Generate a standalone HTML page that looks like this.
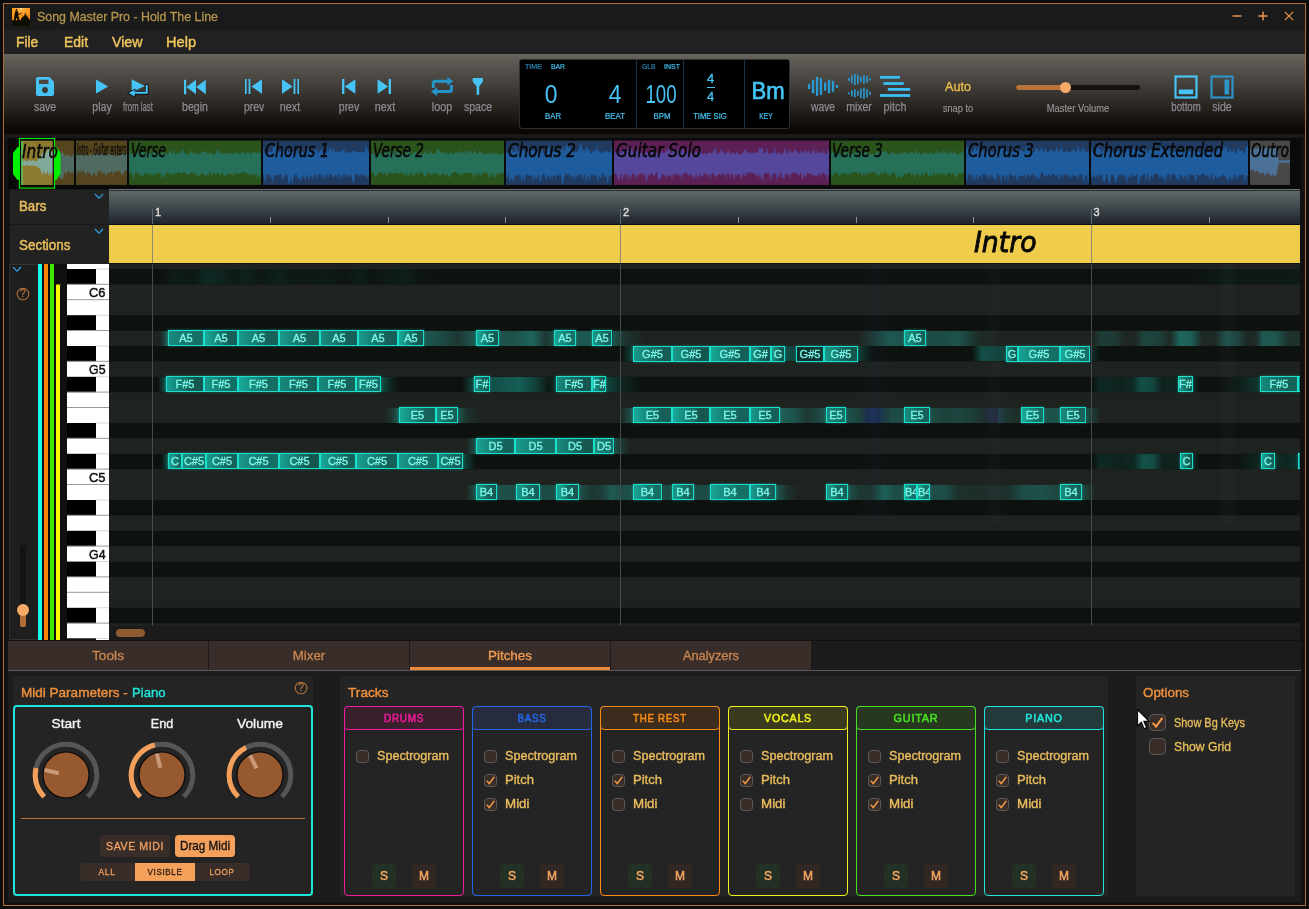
<!DOCTYPE html><html><head><meta charset="utf-8"><title>Song Master Pro - Hold The Line</title><style>
*{box-sizing:border-box;margin:0;padding:0}
html,body{width:1309px;height:909px;overflow:hidden;background:#0b0b0b}
body{font-family:"Liberation Sans",sans-serif;position:relative;color:#ccc}
.a{position:absolute}
.t{position:absolute;white-space:nowrap;line-height:1}
.c{transform:translateX(-50%)}
.lbl{position:absolute;white-space:nowrap;line-height:1;font-size:11.5px;color:#8f8a92;transform:translateX(-50%);top:102px;-webkit-text-stroke:.25px #8f8a92}
.n{position:absolute;height:16px;border:1px solid #1be0cd;color:#7cf4e7;font-size:11px;line-height:14px;text-align:center;overflow:hidden;white-space:nowrap;box-shadow:0 0 2.5px rgba(27,224,205,.45);-webkit-text-stroke:.35px #7cf4e7}
.gl{position:absolute;height:15px;filter:blur(3px)}
.cb{position:absolute;width:13px;height:13px;border:1.5px solid #5e5a58;border-radius:3.5px;background:#382d29}
.cl{position:absolute;white-space:nowrap;line-height:1;font-size:13px;color:#e9bd5c;-webkit-text-stroke:.3px #e9bd5c}
.sm{position:absolute;width:24px;height:24px;border-radius:4px;font-size:12px;line-height:24px;text-align:center;color:#f2a45e;-webkit-text-stroke:.5px #f2a45e}
.hw{font-family:"DejaVu Sans","Liberation Sans",sans-serif;font-style:italic;font-weight:bold;color:#0a0a0a}
</style></head><body><div id="root" style="position:absolute;left:0;top:0;width:1309px;height:909px;will-change:transform">
<div class="a" style="left:3px;top:3px;width:1303px;height:903px;border:1px solid #b06f38;background:#111"></div>
<div class="a" style="left:4px;top:4px;width:1301px;height:26px;background:#1a1a1a"></div>
<div class="a" style="left:4px;top:30px;width:1301px;height:24px;background:#212121"></div>
<div class="a" style="left:4px;top:54px;width:1301px;height:80px;background:linear-gradient(#67645e 0%,#3f3b37 42%,#221e1a 72%,#0a0603 97%)"></div>
<div class="a" style="left:4px;top:134px;width:1301px;height:4px;background:#191919"></div>
<svg class="a" style="left:12px;top:7.700px" width="18" height="18" viewBox="0 0 18 18"><defs><radialGradient id="ig" cx=".5" cy="0" r=".9"><stop offset="0" stop-color="#fff3d8"/><stop offset=".12" stop-color="#ffb040"/><stop offset=".5" stop-color="#ff9a1c"/><stop offset="1" stop-color="#f08a10"/></radialGradient><filter id="ib"><feGaussianBlur stdDeviation=".35"/></filter></defs><rect width="18" height="18" fill="url(#ig)"/><g fill="#0a0806" filter="url(#ib)"><rect x="0" y="12.300" width="18" height="5.700"/><circle cx="4.500" cy="1.900" r=".85"/><path d="M3.300 1.500h3"/><path d="M3.100 3.300h2.900l.4 4.800 1.300 4.200 1 1.800H6.500L4.500 9.600 3.200 14H1.600l.8-5.800z"/><path d="M6 5.800l3.600-1 .3 .8-3.600 1.600z" opacity=".7"/><circle cx="13.300" cy="5.900" r=".8" opacity=".85"/><path d="M12.300 6.800h2.200l.6 2.600h-3.400z" opacity=".85"/><path d="M9.600 7.600l2.300 .9M17 7.800l-2.200 .8" stroke="#0a0806" stroke-width=".7" opacity=".7"/><ellipse cx="13" cy="12" rx="3.900" ry="3.600"/><rect x="9" y="10.500" width="8.500" height="3"/></g></svg>
<div class="t" style="left:37px;top:9.5px;font-size:13.5px;color:#b4964f;-webkit-text-stroke:0.3px #b4964f;transform-origin:0 50%;transform:scaleX(0.918);">Song Master Pro - Hold The Line</div>
<svg class="a" style="left:1228px;top:8px" width="70" height="16" viewBox="0 0 70 16" stroke="#f29a4e" stroke-width="1.4" fill="none"><path d="M4.5 8h9"/><path d="M30.5 8h9M35 3.5v9"/><path d="M56.8 3.8l8.4 8.4M65.2 3.8l-8.4 8.4" stroke-width="1.1"/></svg>
<div class="t" style="left:16.3px;top:34.2px;font-size:15.5px;color:#eec45c;-webkit-text-stroke:0.45px #eec45c;transform-origin:0 50%;transform:scaleX(0.893);">File</div>
<div class="t" style="left:63.5px;top:34.2px;font-size:15.5px;color:#eec45c;-webkit-text-stroke:0.45px #eec45c;transform-origin:0 50%;transform:scaleX(0.899);">Edit</div>
<div class="t" style="left:111.5px;top:34.2px;font-size:15.5px;color:#eec45c;-webkit-text-stroke:0.45px #eec45c;transform-origin:0 50%;transform:scaleX(0.915);">View</div>
<div class="t" style="left:166px;top:34.2px;font-size:15.5px;color:#eec45c;-webkit-text-stroke:0.45px #eec45c;transform-origin:0 50%;transform:scaleX(0.941);">Help</div>
<svg class="a" style="left:36px;top:77px" width="18" height="19" viewBox="0 0 18 18" preserveAspectRatio="none"><path fill="#45c4f5" d="M2 0h11.5L18 4.5V16a2 2 0 0 1-2 2H2a2 2 0 0 1-2-2V2a2 2 0 0 1 2-2z"/><rect x="3" y="2.6" width="9.5" height="4" fill="#4a4742"/><circle cx="9" cy="12.4" r="2.9" fill="#3b3834"/></svg>
<div class="t" style="left:44.9px;top:101.14px;font-size:12px;color:#8f8a92;-webkit-text-stroke:0.25px #8f8a92;transform:translateX(-50%) scaleX(0.876)">save</div>
<svg class="a" style="left:95px;top:78px" width="14" height="16" viewBox="0 0 14 16"><path fill="#45c4f5" d="M1 1.4L13.2 8.6 1 15.6z"/></svg>
<div class="t" style="left:102px;top:101.14px;font-size:12px;color:#8f8a92;-webkit-text-stroke:0.25px #8f8a92;transform:translateX(-50%) scaleX(0.877)">play</div>
<svg class="a" style="left:124px;top:74px" width="28" height="26" viewBox="124 74 28 26"><path fill="#45c4f5" d="M131.700 79.200L144.800 86 131.700 92.200z"/><path d="M146.700 84.200V92.800H134" stroke="#0b0b0b" stroke-width="3.700" fill="none"/><path d="M135.400 88.400L126.800 93.100l8.600 4.700z" fill="#0b0b0b"/><path d="M146.700 85V92.800H134" stroke="#45c4f5" stroke-width="2.100" fill="none"/><path d="M134.600 89.800L128.600 93.100l6 3.300z" fill="#45c4f5"/></svg>
<div class="t" style="left:138px;top:101.14px;font-size:12px;color:#8f8a92;-webkit-text-stroke:0.25px #8f8a92;transform:translateX(-50%) scaleX(0.648)">from last</div>
<svg class="a" style="left:184px;top:78.500px" width="22" height="16" viewBox="0 0.400 22 15.200" preserveAspectRatio="none"><path fill="#45c4f5" d="M0 1h2.2v14H0zM12 1.2v13.6L2.4 8zM21.8 1.2v13.6L12.2 8z"/></svg>
<div class="t" style="left:195px;top:101.14px;font-size:12px;color:#8f8a92;-webkit-text-stroke:0.25px #8f8a92;transform:translateX(-50%) scaleX(0.885)">begin</div>
<svg class="a" style="left:245px;top:78px" width="18" height="17.140" viewBox="0 0 18 16" preserveAspectRatio="none"><path fill="#45c4f5" d="M0 1h1.6v14H0zM3.6 1h1.8v14H3.6zM17 1.2v13.6L6.4 8z"/></svg>
<div class="t" style="left:254px;top:101.14px;font-size:12px;color:#8f8a92;-webkit-text-stroke:0.25px #8f8a92;transform:translateX(-50%) scaleX(0.865)">prev</div>
<svg class="a" style="left:281px;top:78px" width="18" height="17.140" viewBox="0 0 18 16" preserveAspectRatio="none"><path fill="#45c4f5" d="M16.4 1H18v14h-1.6zM12.6 1h1.8v14h-1.8zM1 1.2v13.6L11.6 8z"/></svg>
<div class="t" style="left:289.9px;top:101.14px;font-size:12px;color:#8f8a92;-webkit-text-stroke:0.25px #8f8a92;transform:translateX(-50%) scaleX(0.899)">next</div>
<svg class="a" style="left:341px;top:78px" width="15" height="17.140" viewBox="0 0 15 16" preserveAspectRatio="none"><path fill="#45c4f5" d="M1 1h2.4v14H1zM14.4 1.2v13.6L3.8 8z"/></svg>
<div class="t" style="left:349px;top:101.14px;font-size:12px;color:#8f8a92;-webkit-text-stroke:0.25px #8f8a92;transform:translateX(-50%) scaleX(0.874)">prev</div>
<svg class="a" style="left:377px;top:78px" width="15" height="17.140" viewBox="0 0 15 16" preserveAspectRatio="none"><path fill="#45c4f5" d="M11.6 1H14v14h-2.4zM.6 1.2v13.6L11.2 8z"/></svg>
<div class="t" style="left:384.8px;top:101.14px;font-size:12px;color:#8f8a92;-webkit-text-stroke:0.25px #8f8a92;transform:translateX(-50%) scaleX(0.899)">next</div>
<svg class="a" style="left:428px;top:74px" width="28" height="24" viewBox="428 74 28 24" fill="none"><path d="M433.300 88V83.300a2 2 0 0 1 2-2H448.500M451.400 85V89.600a2 2 0 0 1-2 2H436" stroke="#2596c9" stroke-width="3"/><path d="M447.300 77l6 4.300-6 4.300zM437.200 87.300l-6.200 4.300 6.200 4.300z" fill="#2596c9"/></svg>
<div class="t" style="left:442px;top:101.14px;font-size:12px;color:#8f8a92;-webkit-text-stroke:0.25px #8f8a92;transform:translateX(-50%) scaleX(0.899)">loop</div>
<svg class="a" style="left:470px;top:76px" width="16" height="20" viewBox="470 76 16 20"><path fill="#45c4f5" d="M473.400 78h8.800a.8 .8 0 0 1 .8 .8V81.600L479.200 86.600V94.800H476.600V86.600L472.600 81.600V78.800a.8 .8 0 0 1 .8-.8z"/></svg>
<div class="t" style="left:477.8px;top:101.14px;font-size:12px;color:#8f8a92;-webkit-text-stroke:0.25px #8f8a92;transform:translateX(-50%) scaleX(0.881)">space</div>
<div class="a" style="left:519px;top:59px;width:271px;height:70px;background:#000;border:1px solid #2e2e2e;border-radius:3px"></div>
<div class="a" style="left:636px;top:60px;width:1px;height:68px;background:#14354a"></div>
<div class="a" style="left:683px;top:60px;width:1px;height:68px;background:#14354a"></div>
<div class="a" style="left:744px;top:60px;width:1px;height:68px;background:#14354a"></div>
<div class="t" style="left:525px;top:63.3px;font-size:7.5px;color:#2f88b5;-webkit-text-stroke:0.2px #2f88b5;transform-origin:0 50%;transform:scaleX(0.949);">TIME</div>
<div class="t" style="left:551px;top:63.3px;font-size:7.5px;color:#45c4f5;-webkit-text-stroke:0.2px #45c4f5;transform-origin:0 50%;transform:scaleX(0.908);">BAR</div>
<div class="t" style="left:642px;top:63.3px;font-size:7.5px;color:#2f88b5;-webkit-text-stroke:0.2px #2f88b5;transform-origin:0 50%;transform:scaleX(0.900);">GLB</div>
<div class="t" style="left:664px;top:63.3px;font-size:7.5px;color:#45c4f5;-webkit-text-stroke:0.2px #45c4f5;transform-origin:0 50%;transform:scaleX(0.937);">INST</div>
<div class="t" style="left:550.5px;top:81px;font-size:26px;color:#45c4f5;transform:translateX(-50%) scaleX(0.88);font-weight:normal">0</div>
<div class="t" style="left:614.5px;top:81px;font-size:26px;color:#45c4f5;transform:translateX(-50%) scaleX(0.88);font-weight:normal">4</div>
<div class="t" style="left:661px;top:81px;font-size:26px;color:#45c4f5;transform:translateX(-50%) scaleX(0.72);font-weight:normal">100</div>
<div class="t" style="left:553px;top:111.5px;font-size:9px;color:#45c4f5;-webkit-text-stroke:0.2px #45c4f5;transform:translateX(-50%) scaleX(0.865);">BAR</div>
<div class="t" style="left:615px;top:111.5px;font-size:9px;color:#45c4f5;-webkit-text-stroke:0.2px #45c4f5;transform:translateX(-50%) scaleX(0.876);">BEAT</div>
<div class="t" style="left:661.8px;top:111.5px;font-size:9px;color:#45c4f5;-webkit-text-stroke:0.2px #45c4f5;transform:translateX(-50%) scaleX(0.872);">BPM</div>
<div class="t" style="left:710px;top:111.5px;font-size:9px;color:#45c4f5;-webkit-text-stroke:0.2px #45c4f5;transform:translateX(-50%) scaleX(0.851);">TIME SIG</div>
<div class="t" style="left:766px;top:111.5px;font-size:9px;color:#45c4f5;-webkit-text-stroke:0.2px #45c4f5;transform:translateX(-50%) scaleX(0.750);">KEY</div>
<div class="t c" style="left:710.5px;top:72px;font-size:13px;color:#45c4f5;-webkit-text-stroke:.35px #45c4f5">4</div>
<div class="a" style="left:707px;top:87px;width:8px;height:1px;background:#45c4f5"></div>
<div class="t c" style="left:710.5px;top:90px;font-size:13px;color:#45c4f5;-webkit-text-stroke:.35px #45c4f5">4</div>
<div class="t c" style="left:768px;top:79.500px;font-size:23.500px;color:#45c4f5;-webkit-text-stroke:.7px #45c4f5;transform:translateX(-50%) scaleX(.94)">Bm</div>
<svg class="a" style="left:800px;top:70px" width="120" height="30" viewBox="800 70 120 30"><rect x="807.9" y="83.9" width="2.300" height="5.1" fill="#2a9cd4"/><rect x="811.9" y="79.9" width="2.300" height="13.4" fill="#2a9cd4"/><rect x="815.9" y="76.9" width="2.300" height="18.9" fill="#2a9cd4"/><rect x="819.8" y="78.1" width="2.300" height="16.7" fill="#2a9cd4"/><rect x="824" y="82.4" width="2.300" height="8.2" fill="#2a9cd4"/><rect x="827.9" y="79.6" width="2.300" height="13.5" fill="#2a9cd4"/><rect x="831.8" y="80.9" width="2.300" height="10.9" fill="#2a9cd4"/><rect x="835.8" y="84.9" width="2.300" height="3.1" fill="#2a9cd4"/><rect x="848.00" y="77.90" width="1.600" height="3" fill="#2a9cd4"/><rect x="848.00" y="92.30" width="1.600" height="2" fill="#2a9cd4"/><rect x="851.03" y="75.40" width="1.600" height="8" fill="#2a9cd4"/><rect x="851.03" y="90.30" width="1.600" height="6" fill="#2a9cd4"/><rect x="854.06" y="73.90" width="1.600" height="11" fill="#2a9cd4"/><rect x="854.06" y="89.30" width="1.600" height="8" fill="#2a9cd4"/><rect x="857.09" y="74.60" width="1.600" height="9.6" fill="#2a9cd4"/><rect x="857.09" y="90.80" width="1.600" height="5" fill="#2a9cd4"/><rect x="860.12" y="76.90" width="1.600" height="5" fill="#2a9cd4"/><rect x="860.12" y="88.60" width="1.600" height="9.4" fill="#2a9cd4"/><rect x="863.15" y="75.10" width="1.600" height="8.6" fill="#2a9cd4"/><rect x="863.15" y="87.80" width="1.600" height="11" fill="#2a9cd4"/><rect x="866.18" y="75.90" width="1.600" height="7" fill="#2a9cd4"/><rect x="866.18" y="89.05" width="1.600" height="8.5" fill="#2a9cd4"/><rect x="869.21" y="78.40" width="1.600" height="2" fill="#2a9cd4"/><rect x="869.21" y="91.60" width="1.600" height="3.4" fill="#2a9cd4"/><rect x="879.9" y="75.9" width="20.1" height="2.800" fill="#3abef3"/><rect x="883.4" y="82.1" width="20.3" height="2.800" fill="#3abef3"/><rect x="887.8" y="88.0" width="22.4" height="2.800" fill="#3abef3"/><rect x="879.9" y="94.1" width="30.3" height="2.800" fill="#3abef3"/></svg>
<div class="t" style="left:823px;top:101.14px;font-size:12px;color:#8f8a92;-webkit-text-stroke:0.25px #8f8a92;transform:translateX(-50%) scaleX(0.857)">wave</div>
<div class="t" style="left:859px;top:101.14px;font-size:12px;color:#8f8a92;-webkit-text-stroke:0.25px #8f8a92;transform:translateX(-50%) scaleX(0.876)">mixer</div>
<div class="t" style="left:895px;top:101.14px;font-size:12px;color:#8f8a92;-webkit-text-stroke:0.25px #8f8a92;transform:translateX(-50%) scaleX(0.899)">pitch</div>
<div class="t c" style="left:958px;top:80px;font-size:13.5px;color:#f0be4c;-webkit-text-stroke:.35px #f0be4c;transform:translateX(-50%) scaleX(.93)">Auto</div>
<div class="t" style="left:958px;top:103.11px;font-size:10.5px;color:#9a969a;-webkit-text-stroke:0.15px #9a969a;transform:translateX(-50%) scaleX(0.877)">snap to</div>
<div class="a" style="left:1016px;top:84.500px;width:124px;height:5px;border-radius:3px;background:#151312"></div>
<div class="a" style="left:1016px;top:84.500px;width:50px;height:5px;border-radius:3px;background:#b8733a"></div>
<div class="a" style="left:1059.500px;top:81.500px;width:11px;height:11px;border-radius:50%;background:#f7a968"></div>
<div class="t" style="left:1077.8px;top:103.11px;font-size:10.5px;color:#9a969a;-webkit-text-stroke:0.15px #9a969a;transform:translateX(-50%) scaleX(0.892)">Master Volume</div>
<svg class="a" style="left:1174px;top:75px" width="60" height="24" viewBox="0 0 60 24" fill="none"><rect x="1.500" y="1.500" width="21" height="21" stroke="#45c4f5" stroke-width="2.200"/><rect x="4.800" y="14.500" width="14.400" height="4.700" fill="#45c4f5"/><rect x="37.500" y="1.500" width="21" height="21" stroke="#2f93c8" stroke-width="2.200"/><rect x="50.500" y="4.500" width="4.600" height="15" fill="#2f93c8"/></svg>
<div class="t" style="left:1186px;top:101.14px;font-size:12px;color:#8f8a92;-webkit-text-stroke:0.25px #8f8a92;transform:translateX(-50%) scaleX(0.801)">bottom</div>
<div class="t" style="left:1222.2px;top:101.14px;font-size:12px;color:#8f8a92;-webkit-text-stroke:0.25px #8f8a92;transform:translateX(-50%) scaleX(0.881)">side</div>
<div class="a" style="left:8px;top:138px;width:1293px;height:51px;background:#0a0a0a"></div>
<svg class="a" style="left:0;top:138px" width="1309" height="51" viewBox="0 138 1309 51"><rect x="20" y="140.6" width="54" height="44.3" fill="#54451e"/><path fill="#4f6a60" d="M20 161.0 L21 160.9 L22 160.4 L23 160.9 L24 159.5 L25 161.5 L26 161.4 L27 160.5 L28 160.8 L29 159.4 L30 161.3 L31 160.8 L32 159.9 L33 160.6 L34 161.3 L35 161.5 L36 161.5 L37 159.9 L38 159.3 L39 159.4 L40 155.3 L41 157.9 L42 150.3 L43 152.3 L44 154.6 L45 153.8 L46 149.9 L47 148.9 L48 148.2 L49 150.8 L50 151.0 L51 151.8 L52 153.2 L53 150.1 L54 151.8 L55 154.0 L56 153.4 L57 150.0 L58 155.4 L59 148.0 L60 151.7 L61 154.8 L62 150.8 L63 152.7 L64 154.1 L65 155.3 L66 156.3 L67 154.9 L68 153.7 L69 156.7 L70 154.7 L71 156.8 L72 157.0 L73 153.2 L74 156.7 L74 175.8 L73 171.6 L72 173.6 L71 171.6 L70 175.2 L69 170.7 L68 171.4 L67 172.5 L66 176.0 L65 172.1 L64 172.9 L63 179.1 L62 179.4 L61 178.9 L60 178.8 L59 172.4 L58 175.8 L57 175.1 L56 177.0 L55 171.7 L54 170.8 L53 173.5 L52 171.0 L51 173.4 L50 174.0 L49 172.5 L48 177.3 L47 171.7 L46 171.4 L45 175.7 L44 173.1 L43 171.9 L42 171.6 L41 171.5 L40 170.7 L39 167.3 L38 167.1 L37 166.5 L36 165.1 L35 166.6 L34 165.8 L33 166.1 L32 165.0 L31 165.9 L30 165.2 L29 166.4 L28 165.5 L27 165.9 L26 165.1 L25 165.5 L24 166.0 L23 165.7 L22 165.1 L21 165.3 L20 166.1 z"/><rect x="76" y="140.6" width="51" height="44.3" fill="#54451e"/><path fill="#4f6a60" d="M76 153.7 L77 156.2 L78 150.8 L79 155.5 L80 154.4 L81 153.2 L82 154.0 L83 153.9 L84 155.6 L85 156.8 L86 153.7 L87 154.7 L88 156.8 L89 156.1 L90 153.0 L91 153.9 L92 156.4 L93 155.1 L94 153.3 L95 152.1 L96 153.2 L97 153.1 L98 153.9 L99 153.2 L100 154.3 L101 153.8 L102 153.7 L103 153.2 L104 155.8 L105 154.3 L106 155.9 L107 153.7 L108 155.1 L109 155.0 L110 153.5 L111 154.7 L112 150.2 L113 156.5 L114 155.4 L115 153.8 L116 156.5 L117 154.9 L118 156.2 L119 154.9 L120 155.3 L121 154.2 L122 154.0 L123 153.8 L124 152.0 L125 154.7 L126 153.8 L127 154.3 L127 169.4 L126 172.3 L125 170.3 L124 172.6 L123 174.9 L122 175.1 L121 173.8 L120 171.5 L119 171.1 L118 170.3 L117 171.9 L116 172.1 L115 172.2 L114 171.3 L113 176.5 L112 170.9 L111 171.7 L110 172.1 L109 173.7 L108 172.0 L107 173.7 L106 176.6 L105 173.5 L104 172.6 L103 172.9 L102 174.3 L101 169.8 L100 172.3 L99 171.1 L98 170.1 L97 174.7 L96 178.2 L95 173.8 L94 171.8 L93 175.4 L92 175.9 L91 174.9 L90 173.6 L89 172.7 L88 172.0 L87 171.1 L86 177.3 L85 172.2 L84 172.5 L83 169.4 L82 173.0 L81 169.6 L80 173.8 L79 170.5 L78 170.4 L77 175.9 L76 171.7 z"/><rect x="129" y="140.6" width="132" height="44.3" fill="#2a541c"/><path fill="#26705a" d="M129 150.0 L130 151.9 L131 154.7 L132 153.3 L133 154.6 L134 153.3 L135 151.9 L136 153.7 L137 150.7 L138 153.3 L139 154.1 L140 150.5 L141 153.3 L142 150.8 L143 153.2 L144 151.5 L145 153.7 L146 154.8 L147 150.4 L148 152.9 L149 151.9 L150 153.2 L151 154.2 L152 154.3 L153 153.4 L154 151.9 L155 151.7 L156 154.2 L157 153.9 L158 153.0 L159 152.9 L160 154.5 L161 152.6 L162 153.7 L163 151.2 L164 153.2 L165 153.2 L166 153.9 L167 154.6 L168 152.7 L169 153.6 L170 148.9 L171 151.2 L172 154.3 L173 152.7 L174 149.8 L175 154.9 L176 153.9 L177 153.3 L178 153.8 L179 150.7 L180 152.3 L181 154.2 L182 149.0 L183 149.8 L184 151.5 L185 153.4 L186 153.6 L187 154.7 L188 154.5 L189 154.3 L190 149.2 L191 153.4 L192 149.7 L193 154.1 L194 153.8 L195 152.6 L196 153.3 L197 153.1 L198 153.6 L199 154.8 L200 153.6 L201 153.8 L202 151.8 L203 151.7 L204 151.9 L205 152.0 L206 150.0 L207 152.3 L208 154.2 L209 154.3 L210 149.9 L211 153.4 L212 154.4 L213 154.9 L214 152.7 L215 154.6 L216 153.6 L217 151.0 L218 149.6 L219 150.7 L220 153.4 L221 153.7 L222 151.8 L223 154.7 L224 152.7 L225 153.8 L226 152.2 L227 154.8 L228 153.6 L229 153.3 L230 153.3 L231 153.3 L232 154.3 L233 152.3 L234 154.5 L235 152.1 L236 153.7 L237 150.1 L238 153.8 L239 154.3 L240 154.5 L241 152.4 L242 153.5 L243 152.0 L244 152.5 L245 154.7 L246 153.0 L247 150.9 L248 154.3 L249 150.8 L250 154.8 L251 154.5 L252 152.4 L253 152.6 L254 152.9 L255 150.8 L256 153.8 L257 152.3 L258 153.9 L259 151.1 L260 153.9 L261 152.4 L261 175.3 L260 179.3 L259 173.7 L258 177.6 L257 177.2 L256 171.8 L255 177.2 L254 174.2 L253 173.0 L252 174.7 L251 175.6 L250 173.9 L249 174.2 L248 174.5 L247 172.5 L246 174.2 L245 172.3 L244 171.8 L243 172.3 L242 171.9 L241 173.1 L240 173.1 L239 174.2 L238 173.3 L237 173.1 L236 173.2 L235 172.0 L234 178.1 L233 174.3 L232 171.9 L231 175.5 L230 173.1 L229 173.5 L228 174.6 L227 172.9 L226 176.6 L225 174.7 L224 178.9 L223 172.3 L222 174.3 L221 172.3 L220 178.2 L219 173.4 L218 172.5 L217 173.5 L216 173.8 L215 174.6 L214 172.7 L213 172.0 L212 177.4 L211 173.0 L210 171.9 L209 172.4 L208 179.0 L207 173.5 L206 175.0 L205 176.4 L204 173.7 L203 173.5 L202 172.6 L201 174.8 L200 174.5 L199 177.5 L198 175.6 L197 175.1 L196 172.5 L195 174.7 L194 174.0 L193 172.7 L192 172.3 L191 172.6 L190 173.8 L189 174.0 L188 174.6 L187 175.0 L186 173.8 L185 173.0 L184 171.7 L183 172.7 L182 173.2 L181 173.4 L180 173.0 L179 171.7 L178 172.2 L177 174.2 L176 172.6 L175 172.6 L174 177.5 L173 173.0 L172 174.0 L171 174.5 L170 173.0 L169 173.9 L168 172.5 L167 172.6 L166 173.3 L165 176.8 L164 177.7 L163 173.1 L162 178.6 L161 176.8 L160 172.0 L159 174.4 L158 172.4 L157 173.8 L156 172.7 L155 176.7 L154 173.1 L153 174.5 L152 176.7 L151 171.7 L150 175.2 L149 175.6 L148 172.9 L147 173.0 L146 174.3 L145 172.9 L144 173.4 L143 177.5 L142 175.9 L141 176.6 L140 173.1 L139 176.4 L138 172.0 L137 172.5 L136 172.7 L135 172.8 L134 177.1 L133 179.2 L132 172.6 L131 171.8 L130 174.5 L129 173.4 z"/><rect x="263" y="140.6" width="106" height="44.3" fill="#203a60"/><path fill="#1f5c9e" d="M263 147.2 L264 151.3 L265 153.7 L266 151.6 L267 151.0 L268 152.4 L269 152.0 L270 151.8 L271 151.8 L272 151.8 L273 148.1 L274 146.3 L275 146.2 L276 146.6 L277 145.8 L278 151.3 L279 152.7 L280 151.0 L281 152.4 L282 143.8 L283 148.4 L284 146.2 L285 152.2 L286 152.9 L287 146.8 L288 152.0 L289 151.9 L290 152.3 L291 151.0 L292 152.3 L293 151.2 L294 153.6 L295 145.8 L296 145.1 L297 152.9 L298 153.2 L299 150.4 L300 152.9 L301 150.9 L302 151.3 L303 151.8 L304 153.4 L305 151.6 L306 150.8 L307 146.2 L308 150.0 L309 150.3 L310 150.6 L311 151.4 L312 148.8 L313 152.2 L314 152.3 L315 146.8 L316 152.8 L317 148.9 L318 150.8 L319 153.1 L320 150.8 L321 149.1 L322 150.7 L323 153.1 L324 150.9 L325 150.8 L326 153.6 L327 152.4 L328 145.8 L329 153.0 L330 145.9 L331 149.0 L332 151.8 L333 149.6 L334 147.8 L335 152.8 L336 153.2 L337 152.2 L338 151.1 L339 151.3 L340 153.1 L341 151.5 L342 150.6 L343 151.1 L344 148.1 L345 152.2 L346 153.7 L347 152.3 L348 151.5 L349 153.3 L350 152.1 L351 152.6 L352 151.7 L353 150.7 L354 150.5 L355 151.1 L356 152.0 L357 151.8 L358 151.7 L359 153.1 L360 151.8 L361 151.7 L362 153.1 L363 151.2 L364 153.4 L365 150.6 L366 145.0 L367 147.3 L368 152.0 L369 150.7 L369 175.5 L368 179.3 L367 177.1 L366 175.8 L365 174.4 L364 177.3 L363 173.9 L362 174.2 L361 174.5 L360 176.6 L359 174.6 L358 176.2 L357 173.7 L356 173.5 L355 174.7 L354 183.5 L353 182.6 L352 179.8 L351 173.4 L350 175.5 L349 177.3 L348 177.9 L347 174.5 L346 174.6 L345 174.1 L344 178.4 L343 174.3 L342 178.9 L341 173.9 L340 181.9 L339 173.6 L338 174.0 L337 178.9 L336 174.5 L335 175.0 L334 178.7 L333 176.4 L332 177.2 L331 173.6 L330 174.3 L329 174.6 L328 179.0 L327 174.1 L326 175.5 L325 178.3 L324 178.7 L323 174.0 L322 180.2 L321 173.5 L320 175.6 L319 173.2 L318 175.3 L317 180.5 L316 175.0 L315 173.4 L314 178.2 L313 175.4 L312 180.1 L311 174.8 L310 175.7 L309 180.4 L308 176.7 L307 174.4 L306 178.4 L305 180.6 L304 175.2 L303 178.7 L302 174.4 L301 182.6 L300 178.5 L299 177.5 L298 179.7 L297 175.0 L296 174.1 L295 175.0 L294 175.3 L293 180.2 L292 185.3 L291 175.8 L290 181.5 L289 184.9 L288 180.1 L287 174.4 L286 173.8 L285 175.7 L284 178.1 L283 177.6 L282 181.3 L281 173.5 L280 174.5 L279 174.9 L278 174.6 L277 177.1 L276 173.8 L275 175.8 L274 174.8 L273 184.1 L272 177.9 L271 177.8 L270 174.7 L269 174.5 L268 173.8 L267 175.2 L266 178.8 L265 184.1 L264 174.4 L263 175.4 z"/><rect x="371" y="140.6" width="133" height="44.3" fill="#2a541c"/><path fill="#26705a" d="M371 154.1 L372 153.2 L373 153.7 L374 154.2 L375 152.8 L376 153.1 L377 152.6 L378 150.5 L379 153.2 L380 152.9 L381 154.4 L382 154.9 L383 154.3 L384 151.5 L385 153.9 L386 153.6 L387 152.2 L388 153.6 L389 150.9 L390 153.7 L391 149.8 L392 153.4 L393 148.5 L394 154.8 L395 153.2 L396 153.5 L397 150.6 L398 151.6 L399 152.9 L400 154.7 L401 154.1 L402 154.0 L403 154.0 L404 154.9 L405 154.8 L406 151.4 L407 153.2 L408 152.6 L409 148.5 L410 153.7 L411 154.8 L412 153.8 L413 153.3 L414 151.6 L415 151.2 L416 153.0 L417 153.4 L418 154.0 L419 153.0 L420 153.2 L421 153.6 L422 153.7 L423 154.0 L424 154.1 L425 151.2 L426 150.0 L427 154.3 L428 153.0 L429 154.4 L430 153.6 L431 150.4 L432 153.2 L433 153.3 L434 154.2 L435 154.1 L436 152.9 L437 149.3 L438 148.8 L439 149.9 L440 152.1 L441 152.9 L442 151.6 L443 153.4 L444 153.2 L445 153.0 L446 151.2 L447 153.5 L448 154.7 L449 154.8 L450 150.2 L451 153.4 L452 153.2 L453 154.2 L454 152.2 L455 153.2 L456 152.2 L457 151.6 L458 154.1 L459 151.5 L460 149.9 L461 153.6 L462 151.4 L463 153.0 L464 154.2 L465 149.9 L466 153.7 L467 153.3 L468 150.4 L469 151.2 L470 152.4 L471 149.1 L472 153.9 L473 152.7 L474 152.9 L475 148.8 L476 152.9 L477 154.4 L478 153.7 L479 151.8 L480 151.3 L481 151.8 L482 154.7 L483 152.3 L484 153.9 L485 154.0 L486 154.3 L487 153.5 L488 153.5 L489 153.1 L490 154.3 L491 151.9 L492 154.9 L493 150.8 L494 154.8 L495 153.8 L496 152.4 L497 154.2 L498 153.9 L499 153.8 L500 154.2 L501 154.6 L502 154.1 L503 154.6 L504 149.5 L504 173.6 L503 173.3 L502 173.7 L501 172.5 L500 173.0 L499 175.3 L498 172.7 L497 173.0 L496 177.1 L495 177.1 L494 176.6 L493 172.1 L492 177.8 L491 172.8 L490 175.3 L489 178.7 L488 174.3 L487 173.1 L486 172.6 L485 173.1 L484 171.8 L483 173.0 L482 173.5 L481 177.8 L480 172.5 L479 175.4 L478 173.6 L477 172.2 L476 178.1 L475 172.3 L474 174.8 L473 179.2 L472 172.6 L471 173.2 L470 173.1 L469 172.1 L468 173.7 L467 172.6 L466 172.4 L465 174.2 L464 172.5 L463 174.3 L462 173.4 L461 176.3 L460 174.4 L459 172.9 L458 173.4 L457 173.2 L456 172.3 L455 171.8 L454 171.9 L453 172.9 L452 172.4 L451 175.6 L450 177.8 L449 176.1 L448 176.8 L447 172.3 L446 177.2 L445 175.2 L444 172.8 L443 173.2 L442 175.3 L441 173.4 L440 176.9 L439 172.6 L438 176.4 L437 173.1 L436 173.3 L435 173.3 L434 173.9 L433 173.3 L432 175.5 L431 174.7 L430 172.8 L429 173.4 L428 173.5 L427 172.9 L426 177.9 L425 174.9 L424 178.0 L423 172.4 L422 171.8 L421 174.0 L420 172.0 L419 172.4 L418 176.1 L417 172.7 L416 173.0 L415 173.4 L414 175.6 L413 175.9 L412 171.7 L411 174.9 L410 171.7 L409 176.0 L408 177.3 L407 172.7 L406 172.9 L405 178.7 L404 173.4 L403 172.4 L402 172.9 L401 172.2 L400 173.4 L399 173.1 L398 173.7 L397 172.5 L396 172.5 L395 172.2 L394 174.6 L393 174.0 L392 173.1 L391 173.4 L390 171.9 L389 172.2 L388 174.4 L387 176.7 L386 173.1 L385 173.4 L384 173.2 L383 173.7 L382 174.0 L381 172.5 L380 172.1 L379 172.4 L378 173.4 L377 174.9 L376 176.6 L375 176.2 L374 174.2 L373 172.6 L372 172.0 L371 172.4 z"/><rect x="506" y="140.6" width="106" height="44.3" fill="#203a60"/><path fill="#1f5c9e" d="M506 152.5 L507 151.9 L508 153.6 L509 150.8 L510 150.4 L511 151.0 L512 149.3 L513 151.7 L514 151.9 L515 152.1 L516 144.1 L517 150.8 L518 151.8 L519 151.6 L520 150.5 L521 145.9 L522 152.6 L523 148.1 L524 152.1 L525 149.7 L526 150.2 L527 152.9 L528 150.9 L529 150.9 L530 150.6 L531 149.9 L532 149.1 L533 150.6 L534 150.3 L535 151.5 L536 151.0 L537 152.8 L538 151.4 L539 152.0 L540 149.9 L541 151.3 L542 147.9 L543 153.1 L544 152.8 L545 152.8 L546 151.1 L547 150.7 L548 145.6 L549 147.1 L550 152.4 L551 149.9 L552 146.2 L553 151.8 L554 152.1 L555 151.2 L556 152.2 L557 147.4 L558 152.2 L559 152.2 L560 152.3 L561 149.5 L562 150.0 L563 144.6 L564 152.8 L565 150.1 L566 145.2 L567 144.2 L568 148.7 L569 147.3 L570 144.0 L571 152.5 L572 151.4 L573 151.0 L574 153.2 L575 151.2 L576 151.9 L577 153.1 L578 149.2 L579 150.0 L580 144.8 L581 143.3 L582 147.6 L583 152.5 L584 148.0 L585 152.7 L586 147.8 L587 146.3 L588 150.9 L589 148.1 L590 152.7 L591 153.5 L592 152.8 L593 150.7 L594 151.0 L595 149.4 L596 153.0 L597 144.1 L598 150.5 L599 150.9 L600 153.6 L601 153.2 L602 150.1 L603 153.5 L604 151.5 L605 152.5 L606 151.3 L607 151.0 L608 151.1 L609 152.9 L610 152.0 L611 150.9 L612 146.0 L612 174.9 L611 175.6 L610 175.9 L609 175.1 L608 183.9 L607 181.8 L606 174.5 L605 177.4 L604 176.6 L603 173.1 L602 174.3 L601 178.6 L600 177.3 L599 175.7 L598 181.8 L597 176.4 L596 174.8 L595 176.9 L594 173.5 L593 176.5 L592 174.6 L591 173.8 L590 181.9 L589 176.6 L588 176.3 L587 176.9 L586 183.8 L585 175.6 L584 174.1 L583 178.7 L582 178.8 L581 174.0 L580 174.4 L579 173.6 L578 176.7 L577 174.1 L576 180.3 L575 176.3 L574 174.7 L573 180.4 L572 174.8 L571 177.4 L570 176.0 L569 172.8 L568 176.3 L567 172.9 L566 172.9 L565 175.6 L564 177.8 L563 183.5 L562 184.9 L561 173.5 L560 176.0 L559 175.6 L558 174.8 L557 174.4 L556 179.0 L555 174.8 L554 176.1 L553 175.5 L552 181.4 L551 174.9 L550 177.8 L549 178.8 L548 175.3 L547 176.5 L546 181.6 L545 175.0 L544 174.3 L543 174.6 L542 175.2 L541 179.4 L540 183.4 L539 174.6 L538 175.3 L537 180.1 L536 176.2 L535 179.8 L534 174.4 L533 183.8 L532 177.6 L531 174.7 L530 175.0 L529 175.7 L528 175.9 L527 173.7 L526 175.3 L525 178.7 L524 182.8 L523 174.2 L522 180.3 L521 182.3 L520 173.2 L519 178.9 L518 173.5 L517 175.6 L516 175.6 L515 175.7 L514 179.9 L513 182.4 L512 177.4 L511 179.3 L510 182.6 L509 176.0 L508 173.8 L507 178.6 L506 176.7 z"/><rect x="614" y="140.6" width="215" height="44.3" fill="#5c2054"/><path fill="#54479c" d="M614 153.9 L615 152.5 L616 151.7 L617 153.7 L618 149.2 L619 153.0 L620 152.8 L621 153.3 L622 149.1 L623 149.5 L624 152.8 L625 148.7 L626 150.5 L627 150.6 L628 147.9 L629 152.0 L630 153.2 L631 149.5 L632 147.5 L633 153.5 L634 152.7 L635 152.1 L636 152.4 L637 148.4 L638 150.8 L639 153.8 L640 150.2 L641 152.8 L642 154.0 L643 152.9 L644 153.3 L645 152.4 L646 151.7 L647 152.4 L648 153.4 L649 153.3 L650 152.8 L651 152.4 L652 147.5 L653 154.5 L654 153.9 L655 151.9 L656 152.2 L657 153.6 L658 153.6 L659 152.2 L660 154.3 L661 153.0 L662 150.7 L663 153.3 L664 152.8 L665 152.9 L666 148.8 L667 151.7 L668 147.0 L669 151.8 L670 146.9 L671 154.3 L672 153.2 L673 149.0 L674 148.6 L675 149.9 L676 151.7 L677 152.3 L678 147.0 L679 152.6 L680 150.5 L681 153.7 L682 146.7 L683 150.9 L684 150.8 L685 153.8 L686 151.9 L687 146.9 L688 154.5 L689 153.3 L690 148.3 L691 152.8 L692 153.4 L693 151.8 L694 152.6 L695 153.4 L696 150.3 L697 153.0 L698 153.9 L699 152.3 L700 152.1 L701 147.2 L702 154.6 L703 154.2 L704 153.3 L705 153.6 L706 154.1 L707 154.1 L708 153.3 L709 151.2 L710 153.4 L711 152.4 L712 154.2 L713 151.1 L714 148.5 L715 152.3 L716 145.8 L717 154.5 L718 153.3 L719 152.3 L720 154.0 L721 147.6 L722 151.9 L723 150.4 L724 153.2 L725 154.7 L726 151.5 L727 153.4 L728 150.1 L729 151.2 L730 154.7 L731 153.9 L732 151.6 L733 153.0 L734 153.0 L735 154.0 L736 154.6 L737 150.3 L738 152.8 L739 153.8 L740 154.7 L741 154.0 L742 153.5 L743 153.3 L744 150.1 L745 149.4 L746 150.3 L747 154.4 L748 152.2 L749 151.2 L750 154.4 L751 152.5 L752 153.1 L753 153.1 L754 153.2 L755 151.2 L756 152.4 L757 151.4 L758 153.9 L759 147.5 L760 149.5 L761 148.4 L762 147.3 L763 148.2 L764 154.0 L765 152.8 L766 152.4 L767 145.9 L768 153.0 L769 153.1 L770 154.5 L771 153.2 L772 151.0 L773 153.5 L774 152.3 L775 146.5 L776 154.4 L777 151.7 L778 154.6 L779 150.5 L780 153.9 L781 154.2 L782 153.5 L783 153.9 L784 151.4 L785 146.6 L786 152.5 L787 152.6 L788 154.6 L789 148.8 L790 149.9 L791 153.1 L792 152.3 L793 153.1 L794 150.2 L795 149.0 L796 151.8 L797 149.6 L798 153.6 L799 152.2 L800 154.5 L801 149.1 L802 152.6 L803 152.4 L804 150.8 L805 149.0 L806 153.3 L807 153.0 L808 149.9 L809 150.4 L810 154.5 L811 152.8 L812 150.8 L813 151.7 L814 146.2 L815 153.4 L816 153.6 L817 148.9 L818 154.0 L819 152.3 L820 152.6 L821 151.1 L822 153.2 L823 153.6 L824 149.6 L825 154.5 L826 154.1 L827 154.2 L828 148.4 L829 150.8 L829 173.5 L828 175.6 L827 180.7 L826 173.6 L825 175.7 L824 172.7 L823 173.6 L822 172.5 L821 178.3 L820 174.0 L819 172.8 L818 176.5 L817 175.1 L816 178.4 L815 175.1 L814 175.2 L813 175.7 L812 175.2 L811 172.8 L810 174.9 L809 173.0 L808 173.3 L807 172.6 L806 179.8 L805 173.0 L804 175.9 L803 178.9 L802 179.3 L801 172.3 L800 174.3 L799 176.3 L798 173.3 L797 174.7 L796 172.2 L795 172.3 L794 173.1 L793 172.8 L792 172.8 L791 173.4 L790 179.6 L789 173.4 L788 176.1 L787 174.2 L786 172.8 L785 176.6 L784 178.9 L783 176.9 L782 178.2 L781 172.2 L780 173.4 L779 178.7 L778 172.7 L777 181.4 L776 172.9 L775 174.4 L774 173.5 L773 173.1 L772 181.1 L771 173.7 L770 181.0 L769 171.8 L768 174.0 L767 172.9 L766 173.1 L765 173.6 L764 173.2 L763 181.2 L762 179.4 L761 174.6 L760 180.3 L759 172.8 L758 177.9 L757 174.1 L756 175.9 L755 174.2 L754 172.6 L753 173.0 L752 173.8 L751 172.3 L750 172.3 L749 174.1 L748 172.0 L747 171.9 L746 176.8 L745 177.0 L744 171.9 L743 175.6 L742 177.0 L741 180.0 L740 174.7 L739 174.1 L738 174.6 L737 176.9 L736 172.6 L735 176.8 L734 181.0 L733 174.0 L732 174.1 L731 173.9 L730 180.7 L729 172.2 L728 173.7 L727 173.5 L726 180.3 L725 173.5 L724 175.4 L723 173.1 L722 173.1 L721 176.8 L720 173.4 L719 174.3 L718 175.2 L717 175.6 L716 179.2 L715 174.3 L714 176.4 L713 172.6 L712 172.6 L711 180.0 L710 174.0 L709 174.6 L708 177.8 L707 174.8 L706 174.4 L705 172.6 L704 174.1 L703 176.4 L702 174.8 L701 178.9 L700 172.0 L699 177.2 L698 175.6 L697 179.8 L696 172.6 L695 177.8 L694 180.0 L693 174.4 L692 177.6 L691 174.1 L690 175.4 L689 173.5 L688 177.3 L687 172.5 L686 172.4 L685 173.1 L684 174.4 L683 172.2 L682 180.8 L681 174.2 L680 177.1 L679 174.4 L678 174.1 L677 174.1 L676 174.6 L675 175.4 L674 174.6 L673 173.7 L672 181.4 L671 173.9 L670 175.8 L669 176.4 L668 176.1 L667 173.9 L666 178.5 L665 174.8 L664 176.6 L663 173.2 L662 174.4 L661 178.9 L660 178.0 L659 180.9 L658 179.6 L657 172.5 L656 172.1 L655 175.5 L654 176.8 L653 174.3 L652 174.0 L651 172.9 L650 176.1 L649 175.7 L648 173.7 L647 181.8 L646 180.6 L645 175.7 L644 173.3 L643 176.5 L642 172.0 L641 174.0 L640 174.1 L639 174.1 L638 178.3 L637 174.3 L636 180.8 L635 172.8 L634 177.5 L633 171.9 L632 174.4 L631 179.6 L630 173.6 L629 182.1 L628 174.2 L627 174.6 L626 179.9 L625 173.0 L624 174.1 L623 178.2 L622 181.0 L621 172.4 L620 177.7 L619 180.6 L618 178.9 L617 173.9 L616 174.4 L615 173.1 L614 174.1 z"/><rect x="831" y="140.6" width="133" height="44.3" fill="#2a541c"/><path fill="#26705a" d="M831 154.8 L832 152.2 L833 152.3 L834 153.8 L835 152.3 L836 150.8 L837 154.9 L838 153.7 L839 153.4 L840 154.2 L841 154.8 L842 153.4 L843 154.1 L844 154.7 L845 150.2 L846 151.9 L847 150.9 L848 154.8 L849 152.8 L850 153.2 L851 153.7 L852 152.6 L853 154.0 L854 154.4 L855 150.4 L856 154.2 L857 153.2 L858 152.7 L859 153.6 L860 151.6 L861 153.8 L862 149.6 L863 153.3 L864 153.5 L865 151.9 L866 152.8 L867 154.1 L868 153.5 L869 154.3 L870 153.4 L871 154.5 L872 153.8 L873 154.3 L874 154.1 L875 153.5 L876 152.7 L877 153.0 L878 151.5 L879 153.1 L880 153.5 L881 150.2 L882 150.1 L883 152.6 L884 151.0 L885 150.3 L886 153.1 L887 152.6 L888 154.4 L889 154.3 L890 154.6 L891 153.2 L892 150.5 L893 152.8 L894 153.1 L895 152.7 L896 154.5 L897 154.5 L898 153.2 L899 154.0 L900 153.1 L901 154.6 L902 150.4 L903 154.0 L904 153.5 L905 150.6 L906 152.3 L907 153.8 L908 153.1 L909 153.0 L910 154.2 L911 152.6 L912 151.7 L913 153.7 L914 153.8 L915 152.7 L916 148.7 L917 152.6 L918 154.3 L919 152.2 L920 152.7 L921 154.8 L922 154.2 L923 154.1 L924 151.7 L925 153.9 L926 150.9 L927 154.0 L928 154.3 L929 152.7 L930 154.9 L931 150.9 L932 152.8 L933 154.0 L934 153.4 L935 153.3 L936 148.5 L937 151.7 L938 154.9 L939 153.0 L940 151.4 L941 154.2 L942 150.1 L943 152.0 L944 153.6 L945 151.0 L946 154.3 L947 148.9 L948 154.7 L949 153.2 L950 154.7 L951 150.0 L952 154.0 L953 153.4 L954 150.9 L955 150.2 L956 154.0 L957 154.8 L958 154.4 L959 153.1 L960 154.0 L961 151.7 L962 153.6 L963 149.5 L964 154.1 L964 173.2 L963 172.9 L962 173.6 L961 172.4 L960 175.7 L959 172.8 L958 172.3 L957 175.9 L956 177.0 L955 178.2 L954 173.0 L953 172.9 L952 173.1 L951 175.7 L950 173.0 L949 172.1 L948 174.2 L947 172.7 L946 177.2 L945 175.1 L944 172.7 L943 175.1 L942 172.8 L941 172.9 L940 173.8 L939 174.7 L938 173.3 L937 173.0 L936 178.1 L935 174.0 L934 172.1 L933 173.7 L932 177.5 L931 173.0 L930 176.6 L929 175.7 L928 175.9 L927 172.6 L926 172.9 L925 172.0 L924 178.0 L923 173.2 L922 172.8 L921 178.3 L920 173.6 L919 176.0 L918 174.6 L917 174.6 L916 172.4 L915 178.6 L914 177.6 L913 172.2 L912 175.1 L911 175.2 L910 172.1 L909 171.8 L908 172.5 L907 175.6 L906 173.2 L905 173.9 L904 174.1 L903 176.6 L902 176.6 L901 178.7 L900 177.6 L899 174.4 L898 175.8 L897 179.1 L896 177.5 L895 173.1 L894 171.6 L893 173.0 L892 172.1 L891 178.3 L890 173.0 L889 174.0 L888 178.3 L887 172.3 L886 172.9 L885 173.1 L884 171.7 L883 175.0 L882 173.0 L881 172.4 L880 174.4 L879 176.0 L878 173.4 L877 176.7 L876 172.7 L875 171.6 L874 173.5 L873 171.8 L872 172.1 L871 173.1 L870 173.4 L869 171.7 L868 174.5 L867 174.6 L866 171.8 L865 176.5 L864 172.7 L863 173.4 L862 178.2 L861 173.1 L860 172.7 L859 172.1 L858 174.4 L857 171.9 L856 173.1 L855 171.9 L854 172.2 L853 172.0 L852 173.1 L851 172.8 L850 175.8 L849 172.1 L848 176.6 L847 173.3 L846 173.4 L845 173.4 L844 173.8 L843 172.8 L842 172.6 L841 174.3 L840 176.1 L839 176.4 L838 172.8 L837 173.5 L836 171.8 L835 174.0 L834 173.0 L833 175.4 L832 178.7 L831 172.4 z"/><rect x="966" y="140.6" width="123" height="44.3" fill="#203a60"/><path fill="#1f5c9e" d="M966 150.9 L967 146.9 L968 145.0 L969 150.9 L970 149.4 L971 151.3 L972 149.9 L973 153.2 L974 148.5 L975 146.3 L976 151.3 L977 150.7 L978 147.3 L979 144.8 L980 151.1 L981 151.9 L982 153.0 L983 150.5 L984 150.0 L985 152.4 L986 152.5 L987 149.8 L988 149.7 L989 153.6 L990 149.3 L991 151.6 L992 153.2 L993 151.2 L994 151.2 L995 151.2 L996 147.8 L997 145.8 L998 151.6 L999 151.9 L1000 149.9 L1001 146.5 L1002 145.4 L1003 152.4 L1004 146.7 L1005 153.3 L1006 151.0 L1007 150.4 L1008 152.7 L1009 151.4 L1010 149.3 L1011 152.9 L1012 152.2 L1013 151.0 L1014 149.8 L1015 144.6 L1016 151.3 L1017 148.6 L1018 149.9 L1019 152.6 L1020 149.8 L1021 149.8 L1022 150.4 L1023 151.1 L1024 152.2 L1025 151.1 L1026 144.3 L1027 146.3 L1028 151.1 L1029 147.2 L1030 151.0 L1031 145.9 L1032 146.9 L1033 152.1 L1034 151.9 L1035 151.1 L1036 145.6 L1037 150.1 L1038 147.9 L1039 152.0 L1040 150.7 L1041 145.8 L1042 151.2 L1043 147.5 L1044 153.8 L1045 148.7 L1046 148.6 L1047 152.4 L1048 152.2 L1049 152.0 L1050 149.7 L1051 148.7 L1052 150.1 L1053 151.4 L1054 152.3 L1055 150.8 L1056 148.9 L1057 147.0 L1058 151.5 L1059 151.8 L1060 148.2 L1061 150.5 L1062 145.6 L1063 151.9 L1064 152.9 L1065 151.5 L1066 151.4 L1067 150.1 L1068 152.8 L1069 151.6 L1070 153.1 L1071 150.5 L1072 151.8 L1073 149.3 L1074 148.2 L1075 153.2 L1076 151.2 L1077 151.3 L1078 143.5 L1079 150.4 L1080 151.7 L1081 151.3 L1082 146.2 L1083 151.8 L1084 147.3 L1085 151.7 L1086 150.7 L1087 152.7 L1088 150.9 L1089 151.3 L1089 179.7 L1088 184.7 L1087 174.7 L1086 175.9 L1085 175.1 L1084 184.2 L1083 179.0 L1082 174.1 L1081 173.8 L1080 176.3 L1079 173.6 L1078 179.9 L1077 176.8 L1076 176.5 L1075 174.8 L1074 176.1 L1073 175.2 L1072 175.1 L1071 176.8 L1070 180.3 L1069 174.7 L1068 176.7 L1067 174.3 L1066 175.6 L1065 174.2 L1064 174.4 L1063 178.6 L1062 175.2 L1061 174.0 L1060 176.6 L1059 182.0 L1058 174.5 L1057 175.3 L1056 175.7 L1055 176.4 L1054 173.6 L1053 173.1 L1052 174.4 L1051 176.2 L1050 176.7 L1049 173.6 L1048 175.4 L1047 176.7 L1046 174.0 L1045 177.4 L1044 174.9 L1043 172.9 L1042 172.9 L1041 172.8 L1040 179.7 L1039 176.0 L1038 180.2 L1037 177.3 L1036 174.8 L1035 180.4 L1034 174.8 L1033 173.4 L1032 175.7 L1031 174.8 L1030 177.3 L1029 174.7 L1028 173.7 L1027 176.4 L1026 179.4 L1025 175.0 L1024 173.9 L1023 176.8 L1022 176.1 L1021 176.4 L1020 176.0 L1019 174.9 L1018 178.2 L1017 182.0 L1016 174.7 L1015 176.3 L1014 177.4 L1013 174.9 L1012 176.9 L1011 173.4 L1010 173.2 L1009 175.3 L1008 183.9 L1007 174.6 L1006 176.3 L1005 180.2 L1004 175.1 L1003 174.7 L1002 176.6 L1001 184.7 L1000 174.1 L999 177.8 L998 173.1 L997 174.7 L996 181.9 L995 178.1 L994 179.7 L993 174.8 L992 178.2 L991 175.7 L990 173.6 L989 180.1 L988 177.3 L987 173.5 L986 177.6 L985 173.2 L984 174.1 L983 174.1 L982 179.3 L981 174.0 L980 177.0 L979 176.0 L978 180.0 L977 176.0 L976 173.8 L975 181.0 L974 180.1 L973 174.4 L972 180.9 L971 173.2 L970 175.7 L969 172.8 L968 177.1 L967 182.2 L966 174.1 z"/><rect x="1091" y="140.6" width="157" height="44.3" fill="#203a60"/><path fill="#1f5c9e" d="M1091 153.4 L1092 146.7 L1093 153.1 L1094 150.6 L1095 152.1 L1096 146.0 L1097 151.1 L1098 145.0 L1099 150.2 L1100 146.9 L1101 151.6 L1102 153.2 L1103 149.0 L1104 149.7 L1105 147.9 L1106 151.7 L1107 152.2 L1108 152.8 L1109 149.8 L1110 148.4 L1111 150.4 L1112 152.4 L1113 151.5 L1114 149.3 L1115 151.2 L1116 152.3 L1117 152.6 L1118 151.0 L1119 149.7 L1120 153.6 L1121 152.9 L1122 151.5 L1123 153.5 L1124 150.4 L1125 149.3 L1126 152.8 L1127 147.0 L1128 149.0 L1129 151.2 L1130 153.5 L1131 152.2 L1132 152.4 L1133 146.6 L1134 149.7 L1135 150.7 L1136 150.5 L1137 151.4 L1138 151.6 L1139 148.8 L1140 152.1 L1141 152.2 L1142 150.2 L1143 145.4 L1144 151.7 L1145 150.3 L1146 149.1 L1147 152.2 L1148 152.9 L1149 149.5 L1150 151.8 L1151 149.1 L1152 150.5 L1153 150.2 L1154 149.9 L1155 151.6 L1156 149.2 L1157 146.5 L1158 151.5 L1159 150.9 L1160 151.4 L1161 144.9 L1162 149.4 L1163 144.8 L1164 148.0 L1165 147.2 L1166 152.0 L1167 149.1 L1168 151.1 L1169 149.5 L1170 149.7 L1171 151.4 L1172 148.4 L1173 152.4 L1174 150.7 L1175 152.0 L1176 152.0 L1177 151.2 L1178 151.5 L1179 146.1 L1180 152.6 L1181 153.3 L1182 146.8 L1183 152.8 L1184 152.9 L1185 150.7 L1186 150.2 L1187 150.3 L1188 149.6 L1189 152.2 L1190 149.4 L1191 153.4 L1192 150.9 L1193 147.2 L1194 151.5 L1195 151.3 L1196 153.0 L1197 151.9 L1198 152.3 L1199 152.1 L1200 151.7 L1201 153.1 L1202 151.0 L1203 145.3 L1204 150.1 L1205 151.9 L1206 147.0 L1207 151.1 L1208 152.0 L1209 152.1 L1210 150.9 L1211 153.3 L1212 153.5 L1213 152.3 L1214 148.2 L1215 151.1 L1216 152.7 L1217 152.1 L1218 148.0 L1219 145.5 L1220 150.9 L1221 152.2 L1222 151.9 L1223 150.1 L1224 144.4 L1225 150.1 L1226 145.5 L1227 147.6 L1228 153.1 L1229 152.2 L1230 146.3 L1231 150.7 L1232 152.7 L1233 150.9 L1234 147.9 L1235 153.1 L1236 153.3 L1237 152.3 L1238 147.9 L1239 148.3 L1240 151.0 L1241 150.9 L1242 150.0 L1243 151.6 L1244 153.3 L1245 153.3 L1246 145.7 L1247 147.8 L1248 144.1 L1248 174.0 L1247 176.9 L1246 175.5 L1245 183.4 L1244 174.4 L1243 175.0 L1242 174.8 L1241 174.3 L1240 175.7 L1239 175.0 L1238 179.5 L1237 176.2 L1236 180.3 L1235 174.8 L1234 173.7 L1233 178.7 L1232 180.5 L1231 178.9 L1230 175.6 L1229 179.2 L1228 183.1 L1227 175.8 L1226 179.5 L1225 175.6 L1224 175.4 L1223 174.2 L1222 175.8 L1221 177.4 L1220 175.9 L1219 177.5 L1218 178.9 L1217 177.4 L1216 176.8 L1215 175.5 L1214 178.1 L1213 182.5 L1212 173.8 L1211 174.2 L1210 178.1 L1209 179.8 L1208 173.5 L1207 177.1 L1206 175.5 L1205 176.2 L1204 173.3 L1203 173.4 L1202 174.0 L1201 174.7 L1200 176.2 L1199 174.9 L1198 174.5 L1197 174.2 L1196 182.0 L1195 180.1 L1194 173.9 L1193 175.6 L1192 175.1 L1191 174.3 L1190 174.5 L1189 176.4 L1188 183.3 L1187 173.0 L1186 180.6 L1185 175.7 L1184 176.3 L1183 179.8 L1182 174.8 L1181 175.3 L1180 174.7 L1179 180.7 L1178 180.1 L1177 177.7 L1176 177.6 L1175 173.5 L1174 174.8 L1173 175.1 L1172 173.4 L1171 174.6 L1170 180.9 L1169 174.8 L1168 173.7 L1167 175.1 L1166 183.5 L1165 175.8 L1164 182.9 L1163 175.1 L1162 179.7 L1161 174.5 L1160 179.3 L1159 177.2 L1158 173.6 L1157 175.0 L1156 173.5 L1155 173.6 L1154 173.5 L1153 178.4 L1152 177.2 L1151 175.3 L1150 178.3 L1149 182.2 L1148 173.3 L1147 174.2 L1146 182.0 L1145 175.2 L1144 173.4 L1143 175.8 L1142 174.9 L1141 178.4 L1140 175.1 L1139 184.2 L1138 184.1 L1137 173.1 L1136 174.6 L1135 176.8 L1134 174.9 L1133 177.0 L1132 172.8 L1131 176.6 L1130 177.6 L1129 177.3 L1128 175.7 L1127 185.6 L1126 174.5 L1125 179.6 L1124 174.9 L1123 174.5 L1122 176.9 L1121 174.3 L1120 173.8 L1119 174.8 L1118 177.6 L1117 177.4 L1116 182.5 L1115 182.8 L1114 176.2 L1113 175.2 L1112 174.7 L1111 174.6 L1110 182.9 L1109 183.3 L1108 178.1 L1107 174.3 L1106 175.0 L1105 182.2 L1104 180.9 L1103 181.4 L1102 173.2 L1101 175.8 L1100 174.6 L1099 177.8 L1098 174.8 L1097 175.4 L1096 176.8 L1095 178.2 L1094 173.4 L1093 179.7 L1092 174.6 L1091 178.7 z"/><rect x="1250" y="140.6" width="40" height="44.3" fill="#484848"/><path fill="#4b7199" d="M1250 148.8 L1251 149.2 L1252 148.5 L1253 147.9 L1254 149.0 L1255 148.6 L1256 148.6 L1257 149.2 L1258 148.0 L1259 148.0 L1260 149.3 L1261 149.0 L1262 147.8 L1263 148.3 L1264 147.8 L1265 149.0 L1266 147.9 L1267 147.9 L1268 148.8 L1269 148.6 L1270 148.7 L1271 148.7 L1272 148.5 L1273 147.9 L1274 148.8 L1275 148.2 L1276 148.8 L1277 153.3 L1278 157.3 L1279 161.3 L1280 160.3 L1281 160.3 L1282 160.3 L1283 160.3 L1284 160.3 L1285 160.3 L1286 160.3 L1287 160.3 L1288 160.3 L1289 160.3 L1290 160.3 L1290 162.8 L1289 162.8 L1288 162.8 L1287 162.8 L1286 162.8 L1285 162.8 L1284 162.8 L1283 162.8 L1282 162.8 L1281 162.8 L1280 162.8 L1279 163.3 L1278 167.3 L1277 171.3 L1276 175.4 L1275 176.5 L1274 176.1 L1273 174.5 L1272 173.7 L1271 175.9 L1270 176.5 L1269 172.7 L1268 172.4 L1267 174.6 L1266 172.7 L1265 176.5 L1264 173.9 L1263 171.9 L1262 173.1 L1261 173.3 L1260 173.6 L1259 172.9 L1258 170.5 L1257 170.6 L1256 170.4 L1255 173.2 L1254 169.8 L1253 170.0 L1252 169.0 L1251 170.8 L1250 170.3 z"/><rect x="21" y="140.6" width="33" height="44.3" fill="#8c7a30"/><path fill="#82a89a" d="M21 161.0 L22 160.9 L23 160.4 L24 160.9 L25 159.5 L26 161.5 L27 161.4 L28 160.5 L29 160.8 L30 159.4 L31 161.3 L32 160.8 L33 159.9 L34 160.6 L35 161.3 L36 161.5 L37 160.9 L38 159.0 L39 158.4 L40 158.8 L41 154.1 L42 154.8 L43 150.3 L44 152.3 L45 154.6 L46 153.8 L47 149.9 L48 148.9 L49 148.2 L50 150.8 L51 151.0 L52 151.8 L53 153.2 L54 150.1 L54 173.5 L53 170.9 L52 173.4 L51 173.9 L50 172.5 L49 176.9 L48 171.7 L47 171.4 L46 175.6 L45 173.0 L44 171.9 L43 171.6 L42 176.1 L41 171.6 L40 167.9 L39 167.8 L38 167.4 L37 165.7 L36 166.6 L35 165.8 L34 166.1 L33 165.0 L32 165.9 L31 165.2 L30 166.3 L29 165.5 L28 165.9 L27 165.1 L26 165.5 L25 166.0 L24 165.7 L23 165.1 L22 165.3 L21 166.0 z"/><path fill="#00f000" d="M19 147h-1.500l-4.500 6v21l4.500 6h1.500zM55 147h1.500l4 6v21l-4 6h-1.500z"/><rect x="19.500" y="138.500" width="35" height="49.500" fill="none" stroke="#00ee00" stroke-width="1.300"/><rect x="20.700" y="139.800" width="32.600" height="46.900" fill="none" stroke="#0a0a0a" stroke-width="1.200"/><rect x="21.300" y="141" width="1.400" height="44" fill="#52d060"/></svg>
<div class="t" style="left:22px;top:140.6px;font-family:'DejaVu Sans',sans-serif;font-style:italic;font-size:20px;color:#080808;-webkit-text-stroke:.55px #080808;opacity:1;transform-origin:0 50%;transform:scaleX(0.768)">Intro</div>
<div class="t" style="left:77px;top:143.3px;font-family:'DejaVu Sans',sans-serif;font-style:italic;font-size:15px;color:#080808;-webkit-text-stroke:.55px #080808;opacity:0.85;transform-origin:0 50%;transform:scaleX(0.328)">Intro - Guitar enters</div>
<div class="t" style="left:131px;top:140.9px;font-family:'DejaVu Sans',sans-serif;font-style:italic;font-size:19px;color:#080808;-webkit-text-stroke:.55px #080808;opacity:1;transform-origin:0 50%;transform:scaleX(0.661)">Verse</div>
<div class="t" style="left:264.5px;top:140.9px;font-family:'DejaVu Sans',sans-serif;font-style:italic;font-size:19px;color:#080808;-webkit-text-stroke:.55px #080808;opacity:1;transform-origin:0 50%;transform:scaleX(0.755)">Chorus 1</div>
<div class="t" style="left:373px;top:140.9px;font-family:'DejaVu Sans',sans-serif;font-style:italic;font-size:19px;color:#080808;-webkit-text-stroke:.55px #080808;opacity:1;transform-origin:0 50%;transform:scaleX(0.717)">Verse 2</div>
<div class="t" style="left:508px;top:140.9px;font-family:'DejaVu Sans',sans-serif;font-style:italic;font-size:19px;color:#080808;-webkit-text-stroke:.55px #080808;opacity:1;transform-origin:0 50%;transform:scaleX(0.802)">Chorus 2</div>
<div class="t" style="left:616px;top:140.9px;font-family:'DejaVu Sans',sans-serif;font-style:italic;font-size:19px;color:#080808;-webkit-text-stroke:.55px #080808;opacity:1;transform-origin:0 50%;transform:scaleX(0.805)">Guitar Solo</div>
<div class="t" style="left:832px;top:140.9px;font-family:'DejaVu Sans',sans-serif;font-style:italic;font-size:19px;color:#080808;-webkit-text-stroke:.55px #080808;opacity:1;transform-origin:0 50%;transform:scaleX(0.717)">Verse 3</div>
<div class="t" style="left:968px;top:140.9px;font-family:'DejaVu Sans',sans-serif;font-style:italic;font-size:19px;color:#080808;-webkit-text-stroke:.55px #080808;opacity:1;transform-origin:0 50%;transform:scaleX(0.778)">Chorus 3</div>
<div class="t" style="left:1093px;top:140.9px;font-family:'DejaVu Sans',sans-serif;font-style:italic;font-size:19px;color:#080808;-webkit-text-stroke:.55px #080808;opacity:1;transform-origin:0 50%;transform:scaleX(0.798)">Chorus Extended</div>
<div class="t" style="left:1251px;top:140.9px;font-family:'DejaVu Sans',sans-serif;font-style:italic;font-size:19px;color:#080808;-webkit-text-stroke:.55px #080808;opacity:1;transform-origin:0 50%;transform:scaleX(0.705)">Outro</div>
<div class="a" style="left:9px;top:189px;width:100px;height:75px;background:#171717"></div>
<div class="a" style="left:10px;top:190px;width:98.500px;height:33.500px;background:#222"></div>
<div class="a" style="left:10px;top:225px;width:98.500px;height:38.500px;background:#222"></div>
<div class="t" style="left:19px;top:199px;font-size:14.2px;color:#e8be5c;-webkit-text-stroke:0.5px #e8be5c;transform-origin:0 50%;transform:scaleX(0.935);">Bars</div>
<div class="t" style="left:19px;top:238px;font-size:14.2px;color:#e8be5c;-webkit-text-stroke:0.5px #e8be5c;transform-origin:0 50%;transform:scaleX(0.946);">Sections</div>
<svg class="a" style="left:94px;top:192.5px" width="10" height="7" viewBox="0 0 10 7"><path d="M1 1l4 4.200 4-4.200" fill="none" stroke="#2fa6e8" stroke-width="1.150"/></svg>
<svg class="a" style="left:94px;top:227.5px" width="10" height="7" viewBox="0 0 10 7"><path d="M1 1l4 4.200 4-4.200" fill="none" stroke="#2fa6e8" stroke-width="1.150"/></svg>
<div class="a" style="left:109px;top:189px;width:1191px;height:1px;background:#697174"></div>
<div class="a" style="left:109px;top:190px;width:1191px;height:1px;background:#262c2f"></div>
<div class="a" style="left:109px;top:191px;width:1191px;height:33px;background:linear-gradient(#5f6769 0,#4a5255 35%,#343b40 68%,#1e242a 100%)"></div>
<div class="a" style="left:109px;top:223.700px;width:1191px;height:1px;background:#0c0e10"></div>
<div class="a" style="left:109px;top:224.700px;width:1191px;height:38.300px;background:#f0cc4c"></div>
<div class="a" style="left:109px;top:263px;width:1191px;height:1.500px;background:#141414"></div>
<div class="t" style="left:974px;top:227.5px;font-family:'DejaVu Sans',sans-serif;font-style:italic;font-size:29px;color:#080808;-webkit-text-stroke:.95px #080808;opacity:1;transform-origin:0 50%;transform:scaleX(0.920)">Intro</div>
<svg class="a" style="left:109px;top:264px" width="1191" height="362" viewBox="109 264 1191 362"><rect x="109" y="264" width="1191" height="362" fill="#1e2320"/><rect x="109" y="269.00" width="1191" height="15.40" fill="#0d120f"/><rect x="109" y="315.20" width="1191" height="15.40" fill="#0d120f"/><rect x="109" y="346.00" width="1191" height="15.40" fill="#0d120f"/><rect x="109" y="376.80" width="1191" height="15.40" fill="#0d120f"/><rect x="109" y="423.00" width="1191" height="15.40" fill="#0d120f"/><rect x="109" y="453.80" width="1191" height="15.40" fill="#0d120f"/><rect x="109" y="500.00" width="1191" height="15.40" fill="#0d120f"/><rect x="109" y="530.80" width="1191" height="15.40" fill="#0d120f"/><rect x="109" y="561.60" width="1191" height="15.40" fill="#0d120f"/><rect x="109" y="607.80" width="1191" height="15.40" fill="#0d120f"/></svg>
<div class="a" style="left:160px;top:330.60px;width:8px;height:15.40px;background:linear-gradient(90deg,rgba(27,170,155,0) 0.0%,rgba(27,170,155,0.45) 100.0%)"></div>
<div class="a" style="left:424px;top:330.60px;width:52px;height:15.40px;background:linear-gradient(90deg,rgba(27,170,155,0.4) 0.0%,rgba(27,170,155,0.3) 30.8%,rgba(27,170,155,0.15) 65.4%,rgba(27,170,155,0.4) 100.0%)"></div>
<div class="a" style="left:499px;top:330.60px;width:54.5px;height:15.40px;background:linear-gradient(90deg,rgba(27,170,155,0.35) 0.0%,rgba(27,170,155,0.35) 29.4%,rgba(27,170,155,0.5) 60.6%,rgba(27,170,155,0.15) 84.4%,rgba(27,170,155,0.3) 100.0%)"></div>
<div class="a" style="left:576px;top:330.60px;width:16px;height:15.40px;background:linear-gradient(90deg,rgba(27,170,155,0.4) 0.0%,rgba(27,170,155,0.4) 100.0%)"></div>
<div class="a" style="left:612.5px;top:330.60px;width:32.5px;height:15.40px;background:linear-gradient(90deg,rgba(27,170,155,0.35) 0.0%,rgba(27,170,155,0.12) 38.5%,rgba(27,170,155,0) 100.0%)"></div>
<div class="a" style="left:858px;top:330.60px;width:45.5px;height:15.40px;background:linear-gradient(90deg,rgba(27,170,155,0) 0.0%,rgba(27,170,155,0.2) 37.4%,rgba(27,170,155,0.4) 70.3%,rgba(27,170,155,0.35) 100.0%)"></div>
<div class="a" style="left:925.5px;top:330.60px;width:74.5px;height:15.40px;background:linear-gradient(90deg,rgba(27,170,155,0.3) 0.0%,rgba(27,170,155,0.3) 26.2%,rgba(27,170,155,0.35) 43.6%,rgba(27,170,155,0.05) 73.2%,rgba(27,170,155,0) 100.0%)"></div>
<div class="a" style="left:1092px;top:330.60px;width:208px;height:15.40px;background:linear-gradient(90deg,rgba(27,170,155,0) 0.0%,rgba(27,170,155,0.2) 4.8%,rgba(27,170,155,0.16) 11.1%,rgba(27,170,155,0.02) 16.3%,rgba(27,170,155,0.04) 21.2%,rgba(27,170,155,0.25) 25.0%,rgba(27,170,155,0.2) 32.7%,rgba(27,170,155,0.05) 37.5%,rgba(27,170,155,0.5) 42.3%,rgba(27,170,155,0.45) 47.6%,rgba(27,170,155,0.04) 52.9%,rgba(27,170,155,0.04) 59.1%,rgba(27,170,155,0.34) 64.4%,rgba(27,170,155,0.24) 70.2%,rgba(27,170,155,0.03) 75.0%,rgba(27,170,155,0.06) 78.8%,rgba(27,170,155,0.4) 82.2%,rgba(27,170,155,0.38) 88.5%,rgba(27,170,155,0.1) 94.2%,rgba(27,170,155,0.1) 100.0%)"></div>
<div class="a" style="left:622px;top:346.00px;width:11px;height:15.40px;background:linear-gradient(90deg,rgba(27,170,155,0) 0.0%,rgba(27,170,155,0.35) 100.0%)"></div>
<div class="a" style="left:785px;top:346.00px;width:11px;height:15.40px;background:linear-gradient(90deg,rgba(27,170,155,0.4) 0.0%,rgba(27,170,155,0.3) 100.0%)"></div>
<div class="a" style="left:857.5px;top:346.00px;width:14.5px;height:15.40px;background:linear-gradient(90deg,rgba(27,170,155,0.3) 0.0%,rgba(27,170,155,0) 100.0%)"></div>
<div class="a" style="left:972px;top:346.00px;width:33.5px;height:15.40px;background:linear-gradient(90deg,rgba(27,170,155,0) 0.0%,rgba(27,170,155,0.4) 29.9%,rgba(27,170,155,0.35) 59.7%,rgba(27,170,155,0.3) 100.0%)"></div>
<div class="a" style="left:1090.5px;top:346.00px;width:9.5px;height:15.40px;background:linear-gradient(90deg,rgba(27,170,155,0.2) 0.0%,rgba(27,170,155,0) 100.0%)"></div>
<div class="a" style="left:158px;top:376.80px;width:8px;height:15.40px;background:linear-gradient(90deg,rgba(27,170,155,0) 0.0%,rgba(27,170,155,0.45) 100.0%)"></div>
<div class="a" style="left:381px;top:376.80px;width:19px;height:15.40px;background:linear-gradient(90deg,rgba(27,170,155,0.4) 0.0%,rgba(27,170,155,0.1) 57.9%,rgba(27,170,155,0) 100.0%)"></div>
<div class="a" style="left:462px;top:376.80px;width:12px;height:15.40px;background:linear-gradient(90deg,rgba(27,170,155,0) 0.0%,rgba(27,170,155,0.35) 100.0%)"></div>
<div class="a" style="left:490px;top:376.80px;width:66.5px;height:15.40px;background:linear-gradient(90deg,rgba(27,170,155,0.4) 0.0%,rgba(27,170,155,0.45) 22.6%,rgba(27,170,155,0.5) 45.1%,rgba(27,170,155,0.3) 67.7%,rgba(27,170,155,0.05) 87.2%,rgba(27,170,155,0.2) 100.0%)"></div>
<div class="a" style="left:606px;top:376.80px;width:34px;height:15.40px;background:linear-gradient(90deg,rgba(27,170,155,0.35) 0.0%,rgba(27,170,155,0.15) 41.2%,rgba(27,170,155,0) 100.0%)"></div>
<div class="a" style="left:1092px;top:376.80px;width:86px;height:15.40px;background:linear-gradient(90deg,rgba(27,170,155,0) 0.0%,rgba(27,170,155,0.15) 9.3%,rgba(27,170,155,0.1) 32.6%,rgba(27,170,155,0.15) 46.5%,rgba(27,170,155,0.4) 58.1%,rgba(27,170,155,0.36) 69.8%,rgba(27,170,155,0.1) 81.4%,rgba(27,170,155,0.12) 100.0%)"></div>
<div class="a" style="left:1193px;top:376.80px;width:7px;height:15.40px;background:linear-gradient(90deg,rgba(27,170,155,0.15) 0.0%,rgba(27,170,155,0) 100.0%)"></div>
<div class="a" style="left:1225px;top:376.80px;width:34.5px;height:15.40px;background:linear-gradient(90deg,rgba(27,170,155,0) 0.0%,rgba(27,170,155,0.12) 58.0%,rgba(27,170,155,0.25) 100.0%)"></div>
<div class="a" style="left:384px;top:407.60px;width:15px;height:15.40px;background:linear-gradient(90deg,rgba(27,170,155,0) 0.0%,rgba(27,170,155,0.15) 53.3%,rgba(27,170,155,0.45) 100.0%)"></div>
<div class="a" style="left:458px;top:407.60px;width:20px;height:15.40px;background:linear-gradient(90deg,rgba(27,170,155,0.35) 0.0%,rgba(27,170,155,0.1) 50.0%,rgba(27,170,155,0) 100.0%)"></div>
<div class="a" style="left:620px;top:407.60px;width:13px;height:15.40px;background:linear-gradient(90deg,rgba(27,170,155,0) 0.0%,rgba(27,170,155,0.4) 100.0%)"></div>
<div class="a" style="left:780px;top:407.60px;width:46px;height:15.40px;background:linear-gradient(90deg,rgba(27,170,155,0.45) 0.0%,rgba(27,170,155,0.35) 32.6%,rgba(27,170,155,0.15) 60.9%,rgba(27,170,155,0.25) 82.6%,rgba(27,170,155,0.4) 100.0%)"></div>
<div class="a" style="left:846px;top:407.60px;width:20px;height:15.40px;background:linear-gradient(90deg,rgba(27,170,155,0.35) 0.0%,rgba(27,170,155,0.25) 60.0%,rgba(27,170,155,0.1) 100.0%)"></div>
<div class="a" style="left:880px;top:407.60px;width:23.5px;height:15.40px;background:linear-gradient(90deg,rgba(27,170,155,0.1) 0.0%,rgba(27,170,155,0.3) 51.1%,rgba(27,170,155,0.3) 100.0%)"></div>
<div class="a" style="left:930px;top:407.60px;width:55px;height:15.40px;background:linear-gradient(90deg,rgba(27,170,155,0.3) 0.0%,rgba(27,170,155,0.22) 27.3%,rgba(27,170,155,0.25) 54.5%,rgba(27,170,155,0.18) 81.8%,rgba(27,170,155,0.08) 100.0%)"></div>
<div class="a" style="left:998px;top:407.60px;width:23px;height:15.40px;background:linear-gradient(90deg,rgba(27,170,155,0.18) 0.0%,rgba(27,170,155,0.12) 52.2%,rgba(27,170,155,0.05) 100.0%)"></div>
<div class="a" style="left:1043.5px;top:407.60px;width:16.5px;height:15.40px;background:linear-gradient(90deg,rgba(27,170,155,0.35) 0.0%,rgba(27,170,155,0.35) 100.0%)"></div>
<div class="a" style="left:1086.5px;top:407.60px;width:13.5px;height:15.40px;background:linear-gradient(90deg,rgba(27,170,155,0.3) 0.0%,rgba(27,170,155,0) 100.0%)"></div>
<div class="a" style="left:860px;top:407.60px;width:28px;height:15.40px;background:linear-gradient(90deg,rgba(28,66,160,0) 0.0%,rgba(28,66,160,0.42) 32.1%,rgba(28,66,160,0.42) 60.7%,rgba(28,66,160,0) 100.0%)"></div>
<div class="a" style="left:980px;top:407.60px;width:26px;height:15.40px;background:linear-gradient(90deg,rgba(44,72,150,0) 0.0%,rgba(44,72,150,0.28) 38.5%,rgba(44,72,150,0.2) 69.2%,rgba(44,72,150,0) 100.0%)"></div>
<div class="a" style="left:466px;top:438.40px;width:10px;height:15.40px;background:linear-gradient(90deg,rgba(27,170,155,0) 0.0%,rgba(27,170,155,0.35) 100.0%)"></div>
<div class="a" style="left:614.5px;top:438.40px;width:15.5px;height:15.40px;background:linear-gradient(90deg,rgba(27,170,155,0.3) 0.0%,rgba(27,170,155,0) 100.0%)"></div>
<div class="a" style="left:161px;top:453.80px;width:7px;height:15.40px;background:linear-gradient(90deg,rgba(27,170,155,0) 0.0%,rgba(27,170,155,0.4) 100.0%)"></div>
<div class="a" style="left:463px;top:453.80px;width:13px;height:15.40px;background:linear-gradient(90deg,rgba(27,170,155,0.35) 0.0%,rgba(27,170,155,0) 100.0%)"></div>
<div class="a" style="left:1092px;top:453.80px;width:88px;height:15.40px;background:linear-gradient(90deg,rgba(27,170,155,0) 0.0%,rgba(27,170,155,0.15) 9.1%,rgba(27,170,155,0.1) 34.1%,rgba(27,170,155,0.15) 47.7%,rgba(27,170,155,0.42) 58.0%,rgba(27,170,155,0.38) 69.3%,rgba(27,170,155,0.1) 80.7%,rgba(27,170,155,0.12) 100.0%)"></div>
<div class="a" style="left:1193px;top:453.80px;width:7px;height:15.40px;background:linear-gradient(90deg,rgba(27,170,155,0.15) 0.0%,rgba(27,170,155,0) 100.0%)"></div>
<div class="a" style="left:1235px;top:453.80px;width:26px;height:15.40px;background:linear-gradient(90deg,rgba(27,170,155,0) 0.0%,rgba(27,170,155,0.08) 57.7%,rgba(27,170,155,0.15) 100.0%)"></div>
<div class="a" style="left:1275px;top:453.80px;width:23px;height:15.40px;background:linear-gradient(90deg,rgba(27,170,155,0.2) 0.0%,rgba(27,170,155,0.12) 43.5%,rgba(27,170,155,0.2) 100.0%)"></div>
<div class="a" style="left:466px;top:484.60px;width:10px;height:15.40px;background:linear-gradient(90deg,rgba(27,170,155,0) 0.0%,rgba(27,170,155,0.35) 100.0%)"></div>
<div class="a" style="left:497px;top:484.60px;width:18.5px;height:15.40px;background:linear-gradient(90deg,rgba(27,170,155,0.35) 0.0%,rgba(27,170,155,0.3) 100.0%)"></div>
<div class="a" style="left:540px;top:484.60px;width:16px;height:15.40px;background:linear-gradient(90deg,rgba(27,170,155,0.3) 0.0%,rgba(27,170,155,0.3) 100.0%)"></div>
<div class="a" style="left:579px;top:484.60px;width:54px;height:15.40px;background:linear-gradient(90deg,rgba(27,170,155,0.35) 0.0%,rgba(27,170,155,0.15) 24.1%,rgba(27,170,155,0.2) 42.6%,rgba(27,170,155,0.42) 61.1%,rgba(27,170,155,0.3) 79.6%,rgba(27,170,155,0.35) 100.0%)"></div>
<div class="a" style="left:662.5px;top:484.60px;width:9.5px;height:15.40px;background:linear-gradient(90deg,rgba(27,170,155,0.3) 0.0%,rgba(27,170,155,0.3) 100.0%)"></div>
<div class="a" style="left:694px;top:484.60px;width:16.5px;height:15.40px;background:linear-gradient(90deg,rgba(27,170,155,0.3) 0.0%,rgba(27,170,155,0.3) 100.0%)"></div>
<div class="a" style="left:776px;top:484.60px;width:22px;height:15.40px;background:linear-gradient(90deg,rgba(27,170,155,0.4) 0.0%,rgba(27,170,155,0.1) 54.5%,rgba(27,170,155,0) 100.0%)"></div>
<div class="a" style="left:848px;top:484.60px;width:55.5px;height:15.40px;background:linear-gradient(90deg,rgba(27,170,155,0.35) 0.0%,rgba(27,170,155,0.15) 21.6%,rgba(27,170,155,0.15) 43.2%,rgba(27,170,155,0.45) 64.9%,rgba(27,170,155,0.3) 82.9%,rgba(27,170,155,0.35) 100.0%)"></div>
<div class="a" style="left:930px;top:484.60px;width:130px;height:15.40px;background:linear-gradient(90deg,rgba(27,170,155,0.3) 0.0%,rgba(27,170,155,0.32) 11.5%,rgba(27,170,155,0.1) 21.5%,rgba(27,170,155,0.08) 42.3%,rgba(27,170,155,0.1) 60.0%,rgba(27,170,155,0.3) 70.8%,rgba(27,170,155,0.34) 84.6%,rgba(27,170,155,0.25) 100.0%)"></div>
<div class="a" style="left:1082px;top:484.60px;width:13px;height:15.40px;background:linear-gradient(90deg,rgba(27,170,155,0.3) 0.0%,rgba(27,170,155,0) 100.0%)"></div>
<div class="a" style="left:160px;top:269.00px;width:280px;height:15.40px;background:linear-gradient(90deg,rgba(27,170,155,0) 0.0%,rgba(27,170,155,0.06) 5.4%,rgba(27,170,155,0.04) 12.5%,rgba(27,170,155,0.14) 16.1%,rgba(27,170,155,0.12) 21.4%,rgba(27,170,155,0.05) 26.8%,rgba(27,170,155,0.1) 30.4%,rgba(27,170,155,0.03) 35.7%,rgba(27,170,155,0.1) 42.9%,rgba(27,170,155,0.04) 47.1%,rgba(27,170,155,0.05) 60.7%,rgba(27,170,155,0.02) 66.1%,rgba(27,170,155,0.08) 72.1%,rgba(27,170,155,0.02) 75.7%,rgba(27,170,155,0.08) 87.5%,rgba(27,170,155,0.02) 92.9%,rgba(27,170,155,0) 100.0%)"></div>
<div class="a" style="left:1190px;top:269.00px;width:110px;height:15.40px;background:linear-gradient(90deg,rgba(27,170,155,0) 0.0%,rgba(27,170,155,0.05) 27.3%,rgba(27,170,155,0.04) 63.6%,rgba(27,170,155,0.05) 100.0%)"></div>
<div class="a" style="left:858px;top:264px;width:34px;height:260px;background:linear-gradient(90deg,rgba(40,70,150,0),rgba(40,70,150,.05),rgba(40,70,150,0))"></div>
<div class="a" style="left:982px;top:264px;width:24px;height:260px;background:linear-gradient(90deg,rgba(90,100,140,0),rgba(90,100,140,.05),rgba(90,100,140,0))"></div>
<div class="a" style="left:1216px;top:264px;width:24px;height:260px;background:linear-gradient(90deg,rgba(80,90,110,0),rgba(80,90,110,.08),rgba(80,90,110,0))"></div>
<div class="a" style="left:152.0px;top:209px;width:1px;height:15px;background:#5c6872"></div>
<div class="a" style="left:152.0px;top:224.700px;width:1px;height:38.300px;background:#8f8b68"></div>
<div class="a" style="left:152.0px;top:264px;width:1px;height:362px;background:#444c52"></div>
<div class="t" style="left:155.0px;top:207px;font-size:11px;color:#e4e4e4;-webkit-text-stroke:0.3px #e4e4e4;">1</div>
<div class="a" style="left:620.0px;top:209px;width:1px;height:15px;background:#5c6872"></div>
<div class="a" style="left:620.0px;top:224.700px;width:1px;height:38.300px;background:#8f8b68"></div>
<div class="a" style="left:620.0px;top:264px;width:1px;height:362px;background:#444c52"></div>
<div class="t" style="left:623.0px;top:207px;font-size:11px;color:#e4e4e4;-webkit-text-stroke:0.3px #e4e4e4;">2</div>
<div class="a" style="left:1090.5px;top:209px;width:1px;height:15px;background:#5c6872"></div>
<div class="a" style="left:1090.5px;top:224.700px;width:1px;height:38.300px;background:#8f8b68"></div>
<div class="a" style="left:1090.5px;top:264px;width:1px;height:362px;background:#444c52"></div>
<div class="t" style="left:1093.5px;top:207px;font-size:11px;color:#e4e4e4;-webkit-text-stroke:0.3px #e4e4e4;">3</div>
<div class="a" style="left:270.3px;top:217px;width:1px;height:5.500px;background:#8a9092"></div>
<div class="a" style="left:387.5px;top:217px;width:1px;height:5.500px;background:#8a9092"></div>
<div class="a" style="left:504.7px;top:217px;width:1px;height:5.500px;background:#8a9092"></div>
<div class="a" style="left:738.3px;top:217px;width:1px;height:5.500px;background:#8a9092"></div>
<div class="a" style="left:855.5px;top:217px;width:1px;height:5.500px;background:#8a9092"></div>
<div class="a" style="left:972.8px;top:217px;width:1px;height:5.500px;background:#8a9092"></div>
<div class="a" style="left:1208.8px;top:217px;width:1px;height:5.500px;background:#8a9092"></div>
<div class="n" style="left:168px;top:330px;width:36px;background:linear-gradient(90deg,rgba(24,148,135,0.92),rgba(22,118,108,0.92) 75%,rgba(22,118,108,0.92));">A5</div>
<div class="n" style="left:204px;top:330px;width:34px;background:linear-gradient(90deg,rgba(24,182,165,0.92),rgba(22,100,92,0.92) 75%,rgba(22,100,92,0.92));">A5</div>
<div class="n" style="left:238px;top:330px;width:41px;background:linear-gradient(90deg,rgba(24,165,150,0.92),rgba(22,104,95,0.92) 75%,rgba(22,104,95,0.92));">A5</div>
<div class="n" style="left:279px;top:330px;width:41px;background:linear-gradient(90deg,rgba(24,165,150,0.92),rgba(22,104,95,0.92) 75%,rgba(22,104,95,0.92));">A5</div>
<div class="n" style="left:320px;top:330px;width:38px;background:linear-gradient(90deg,rgba(24,148,135,0.92),rgba(22,100,92,0.92) 75%,rgba(22,100,92,0.92));">A5</div>
<div class="n" style="left:358px;top:330px;width:40px;background:linear-gradient(90deg,rgba(24,165,150,0.92),rgba(22,100,92,0.92) 75%,rgba(22,100,92,0.92));">A5</div>
<div class="n" style="left:398px;top:330px;width:26px;background:linear-gradient(90deg,rgba(24,182,165,0.92),rgba(22,92,84,0.92) 75%,rgba(22,92,84,0.92));">A5</div>
<div class="n" style="left:476px;top:330px;width:23px;background:linear-gradient(90deg,rgba(24,182,165,0.92),rgba(22,92,84,0.92) 75%,rgba(22,92,84,0.92));">A5</div>
<div class="n" style="left:554px;top:330px;width:22px;background:linear-gradient(90deg,rgba(24,174,158,0.92),rgba(22,118,108,0.92) 75%,rgba(22,118,108,0.92));">A5</div>
<div class="n" style="left:592px;top:330px;width:20px;background:linear-gradient(90deg,rgba(24,165,150,0.92),rgba(22,100,92,0.92) 75%,rgba(22,100,92,0.92));">A5</div>
<div class="n" style="left:904px;top:330px;width:22px;background:linear-gradient(90deg,rgba(24,165,150,0.92),rgba(22,104,95,0.92) 75%,rgba(22,104,95,0.92));">A5</div>
<div class="n" style="left:633px;top:346px;width:39px;background:linear-gradient(90deg,rgba(24,165,150,0.92),rgba(22,100,92,0.92) 75%,rgba(22,100,92,0.92));">G#5</div>
<div class="n" style="left:672px;top:346px;width:38px;background:linear-gradient(90deg,rgba(24,165,150,0.92),rgba(22,92,84,0.92) 75%,rgba(22,92,84,0.92));">G#5</div>
<div class="n" style="left:710px;top:346px;width:40px;background:linear-gradient(90deg,rgba(24,182,165,0.92),rgba(22,104,95,0.92) 75%,rgba(22,104,95,0.92));">G#5</div>
<div class="n" style="left:750px;top:346px;width:21px;background:linear-gradient(90deg,rgba(24,165,150,0.92),rgba(22,92,84,0.92) 75%,rgba(22,92,84,0.92));">G#</div>
<div class="n" style="left:771px;top:346px;width:14px;background:linear-gradient(90deg,rgba(24,165,150,0.92),rgba(22,92,84,0.92) 75%,rgba(22,92,84,0.92));">G</div>
<div class="n" style="left:796px;top:346px;width:28px;background:linear-gradient(90deg,rgba(16,50,46,0.9),rgba(16,60,55,0.9) 75%,rgba(16,60,55,0.9));">G#5</div>
<div class="n" style="left:824px;top:346px;width:34px;background:linear-gradient(90deg,rgba(24,165,150,0.92),rgba(22,92,84,0.92) 75%,rgba(22,92,84,0.92));">G#5</div>
<div class="n" style="left:1006px;top:346px;width:12px;background:linear-gradient(90deg,rgba(24,165,150,0.92),rgba(22,92,84,0.92) 75%,rgba(22,92,84,0.92));">G</div>
<div class="n" style="left:1018px;top:346px;width:42px;background:linear-gradient(90deg,rgba(24,174,158,0.92),rgba(22,118,108,0.92) 75%,rgba(22,118,108,0.92));">G#5</div>
<div class="n" style="left:1060px;top:346px;width:30px;background:linear-gradient(90deg,rgba(24,182,165,0.92),rgba(22,118,108,0.92) 75%,rgba(22,118,108,0.92));">G#5</div>
<div class="n" style="left:166px;top:376px;width:38px;background:linear-gradient(90deg,rgba(24,174,158,0.92),rgba(22,92,84,0.92) 75%,rgba(22,92,84,0.92));">F#5</div>
<div class="n" style="left:204px;top:376px;width:34px;background:linear-gradient(90deg,rgba(24,165,150,0.92),rgba(22,118,108,0.92) 75%,rgba(22,118,108,0.92));">F#5</div>
<div class="n" style="left:238px;top:376px;width:41px;background:linear-gradient(90deg,rgba(24,182,165,0.92),rgba(22,118,108,0.92) 75%,rgba(22,118,108,0.92));">F#5</div>
<div class="n" style="left:279px;top:376px;width:39px;background:linear-gradient(90deg,rgba(24,148,135,0.92),rgba(22,104,95,0.92) 75%,rgba(22,104,95,0.92));">F#5</div>
<div class="n" style="left:318px;top:376px;width:38px;background:linear-gradient(90deg,rgba(24,148,135,0.92),rgba(22,104,95,0.92) 75%,rgba(22,104,95,0.92));">F#5</div>
<div class="n" style="left:356px;top:376px;width:25px;background:linear-gradient(90deg,rgba(24,148,135,0.92),rgba(22,118,108,0.92) 75%,rgba(22,118,108,0.92));">F#5</div>
<div class="n" style="left:474px;top:376px;width:16px;background:linear-gradient(90deg,rgba(24,148,135,0.92),rgba(22,100,92,0.92) 75%,rgba(22,100,92,0.92));">F#</div>
<div class="n" style="left:556px;top:376px;width:36px;background:linear-gradient(90deg,rgba(24,148,135,0.92),rgba(22,92,84,0.92) 75%,rgba(22,92,84,0.92));">F#5</div>
<div class="n" style="left:592px;top:376px;width:14px;background:linear-gradient(90deg,rgba(24,174,158,0.92),rgba(22,100,92,0.92) 75%,rgba(22,100,92,0.92));">F#</div>
<div class="n" style="left:1178px;top:376px;width:15px;background:linear-gradient(90deg,rgba(24,165,150,0.92),rgba(22,104,95,0.92) 75%,rgba(22,104,95,0.92));">F#</div>
<div class="n" style="left:1260px;top:376px;width:38px;background:linear-gradient(90deg,rgba(24,148,135,0.92),rgba(22,104,95,0.92) 75%,rgba(22,104,95,0.92));">F#5</div>
<div class="n" style="left:1298px;top:376px;width:5px;background:linear-gradient(90deg,rgba(24,148,135,0.92),rgba(22,100,92,0.92) 75%,rgba(22,100,92,0.92));clip-path:inset(-4px 3px -4px -4px);"></div>
<div class="n" style="left:399px;top:407px;width:37px;background:linear-gradient(90deg,rgba(24,182,165,0.92),rgba(22,100,92,0.92) 75%,rgba(22,100,92,0.92));">E5</div>
<div class="n" style="left:436px;top:407px;width:22px;background:linear-gradient(90deg,rgba(24,148,135,0.92),rgba(22,100,92,0.92) 75%,rgba(22,100,92,0.92));">E5</div>
<div class="n" style="left:633px;top:407px;width:39px;background:linear-gradient(90deg,rgba(24,182,165,0.92),rgba(22,100,92,0.92) 75%,rgba(22,100,92,0.92));">E5</div>
<div class="n" style="left:672px;top:407px;width:38px;background:linear-gradient(90deg,rgba(24,182,165,0.92),rgba(22,92,84,0.92) 75%,rgba(22,92,84,0.92));">E5</div>
<div class="n" style="left:710px;top:407px;width:40px;background:linear-gradient(90deg,rgba(24,165,150,0.92),rgba(22,104,95,0.92) 75%,rgba(22,104,95,0.92));">E5</div>
<div class="n" style="left:750px;top:407px;width:30px;background:linear-gradient(90deg,rgba(24,165,150,0.92),rgba(22,100,92,0.92) 75%,rgba(22,100,92,0.92));">E5</div>
<div class="n" style="left:826px;top:407px;width:20px;background:linear-gradient(90deg,rgba(24,148,135,0.92),rgba(22,118,108,0.92) 75%,rgba(22,118,108,0.92));">E5</div>
<div class="n" style="left:904px;top:407px;width:26px;background:linear-gradient(90deg,rgba(24,148,135,0.92),rgba(22,100,92,0.92) 75%,rgba(22,100,92,0.92));">E5</div>
<div class="n" style="left:1021px;top:407px;width:23px;background:linear-gradient(90deg,rgba(24,182,165,0.92),rgba(22,118,108,0.92) 75%,rgba(22,118,108,0.92));">E5</div>
<div class="n" style="left:1060px;top:407px;width:26px;background:linear-gradient(90deg,rgba(24,148,135,0.92),rgba(22,104,95,0.92) 75%,rgba(22,104,95,0.92));">E5</div>
<div class="n" style="left:476px;top:438px;width:39px;background:linear-gradient(90deg,rgba(24,174,158,0.92),rgba(22,104,95,0.92) 75%,rgba(22,104,95,0.92));">D5</div>
<div class="n" style="left:515px;top:438px;width:41px;background:linear-gradient(90deg,rgba(24,165,150,0.92),rgba(22,118,108,0.92) 75%,rgba(22,118,108,0.92));">D5</div>
<div class="n" style="left:556px;top:438px;width:38px;background:linear-gradient(90deg,rgba(24,148,135,0.92),rgba(22,92,84,0.92) 75%,rgba(22,92,84,0.92));">D5</div>
<div class="n" style="left:594px;top:438px;width:20px;background:linear-gradient(90deg,rgba(24,148,135,0.92),rgba(22,118,108,0.92) 75%,rgba(22,118,108,0.92));">D5</div>
<div class="n" style="left:168px;top:453px;width:14px;background:linear-gradient(90deg,rgba(24,182,165,0.92),rgba(22,118,108,0.92) 75%,rgba(22,118,108,0.92));">C</div>
<div class="n" style="left:182px;top:453px;width:24px;background:linear-gradient(90deg,rgba(24,148,135,0.92),rgba(22,118,108,0.92) 75%,rgba(22,118,108,0.92));">C#5</div>
<div class="n" style="left:206px;top:453px;width:32px;background:linear-gradient(90deg,rgba(24,165,150,0.92),rgba(22,104,95,0.92) 75%,rgba(22,104,95,0.92));">C#5</div>
<div class="n" style="left:238px;top:453px;width:41px;background:linear-gradient(90deg,rgba(24,165,150,0.92),rgba(22,118,108,0.92) 75%,rgba(22,118,108,0.92));">C#5</div>
<div class="n" style="left:279px;top:453px;width:41px;background:linear-gradient(90deg,rgba(24,174,158,0.92),rgba(22,92,84,0.92) 75%,rgba(22,92,84,0.92));">C#5</div>
<div class="n" style="left:320px;top:453px;width:36px;background:linear-gradient(90deg,rgba(24,182,165,0.92),rgba(22,104,95,0.92) 75%,rgba(22,104,95,0.92));">C#5</div>
<div class="n" style="left:356px;top:453px;width:42px;background:linear-gradient(90deg,rgba(24,174,158,0.92),rgba(22,104,95,0.92) 75%,rgba(22,104,95,0.92));">C#5</div>
<div class="n" style="left:398px;top:453px;width:40px;background:linear-gradient(90deg,rgba(24,165,150,0.92),rgba(22,118,108,0.92) 75%,rgba(22,118,108,0.92));">C#5</div>
<div class="n" style="left:438px;top:453px;width:25px;background:linear-gradient(90deg,rgba(24,148,135,0.92),rgba(22,100,92,0.92) 75%,rgba(22,100,92,0.92));">C#5</div>
<div class="n" style="left:1180px;top:453px;width:13px;background:linear-gradient(90deg,rgba(24,174,158,0.92),rgba(22,92,84,0.92) 75%,rgba(22,92,84,0.92));">C</div>
<div class="n" style="left:1261px;top:453px;width:14px;background:linear-gradient(90deg,rgba(24,182,165,0.92),rgba(22,104,95,0.92) 75%,rgba(22,104,95,0.92));">C</div>
<div class="n" style="left:1298px;top:453px;width:5px;background:linear-gradient(90deg,rgba(24,174,158,0.92),rgba(22,118,108,0.92) 75%,rgba(22,118,108,0.92));clip-path:inset(-4px 3px -4px -4px);"></div>
<div class="n" style="left:476px;top:484px;width:21px;background:linear-gradient(90deg,rgba(24,165,150,0.92),rgba(22,92,84,0.92) 75%,rgba(22,92,84,0.92));">B4</div>
<div class="n" style="left:516px;top:484px;width:24px;background:linear-gradient(90deg,rgba(24,165,150,0.92),rgba(22,100,92,0.92) 75%,rgba(22,100,92,0.92));">B4</div>
<div class="n" style="left:556px;top:484px;width:23px;background:linear-gradient(90deg,rgba(24,182,165,0.92),rgba(22,92,84,0.92) 75%,rgba(22,92,84,0.92));">B4</div>
<div class="n" style="left:633px;top:484px;width:29px;background:linear-gradient(90deg,rgba(24,174,158,0.92),rgba(22,118,108,0.92) 75%,rgba(22,118,108,0.92));">B4</div>
<div class="n" style="left:672px;top:484px;width:22px;background:linear-gradient(90deg,rgba(24,165,150,0.92),rgba(22,104,95,0.92) 75%,rgba(22,104,95,0.92));">B4</div>
<div class="n" style="left:710px;top:484px;width:40px;background:linear-gradient(90deg,rgba(24,174,158,0.92),rgba(22,118,108,0.92) 75%,rgba(22,118,108,0.92));">B4</div>
<div class="n" style="left:750px;top:484px;width:26px;background:linear-gradient(90deg,rgba(24,165,150,0.92),rgba(22,100,92,0.92) 75%,rgba(22,100,92,0.92));">B4</div>
<div class="n" style="left:826px;top:484px;width:22px;background:linear-gradient(90deg,rgba(24,165,150,0.92),rgba(22,100,92,0.92) 75%,rgba(22,100,92,0.92));">B4</div>
<div class="n" style="left:904px;top:484px;width:13px;background:linear-gradient(90deg,rgba(24,174,158,0.92),rgba(22,118,108,0.92) 75%,rgba(22,118,108,0.92));">B4</div>
<div class="n" style="left:917px;top:484px;width:13px;background:linear-gradient(90deg,rgba(24,174,158,0.92),rgba(22,118,108,0.92) 75%,rgba(22,118,108,0.92));">B4</div>
<div class="n" style="left:1060px;top:484px;width:22px;background:linear-gradient(90deg,rgba(24,148,135,0.92),rgba(22,100,92,0.92) 75%,rgba(22,100,92,0.92));">B4</div>
<div class="a" style="left:9px;top:264px;width:28.500px;height:376px;background:#1e1e1e;border-left:1px solid #2e2e2e;border-top:1.500px solid #333;border-bottom:1px solid #333"></div>
<div class="a" style="left:37.500px;top:264px;width:29.500px;height:376px;background:#101010"></div>
<div class="a" style="left:38px;top:264px;width:4.200px;height:376px;background:#19fbe6"></div>
<div class="a" style="left:44px;top:264px;width:4.200px;height:376px;background:#ff8400"></div>
<div class="a" style="left:50px;top:264px;width:4.200px;height:376px;background:#40e605"></div>
<div class="a" style="left:56px;top:285.3px;width:4.200px;height:354.7px;background:#fff800"></div>
<div class="a" style="left:55.500px;top:284px;width:5.200px;height:1.300px;background:#7a7210"></div>
<svg class="a" style="left:16px;top:287px" width="14" height="14" viewBox="0 0 14 14"><circle cx="7" cy="7" r="5.800" fill="none" stroke="#b06f38" stroke-width="1.100"/></svg>
<div class="t" style="left:22.8px;top:289.2px;font-size:10px;color:#b06f38;-webkit-text-stroke:0.3px #b06f38;transform:translateX(-50%);">?</div>
<svg class="a" style="left:12px;top:266px" width="10" height="7" viewBox="0 0 10 7"><path d="M1 1l4 4.200 4-4.200" fill="none" stroke="#2fa6e8" stroke-width="1.150"/></svg>
<div class="a" style="left:20px;top:545px;width:6px;height:82px;border-radius:2px;background:#141414"></div>
<div class="a" style="left:20px;top:610px;width:6px;height:17px;border-radius:2px;background:#b06f38"></div>
<div class="a" style="left:16.800px;top:603.600px;width:12.400px;height:12.400px;border-radius:50%;background:#f7a968"></div>
<svg class="a" style="left:67px;top:264px" width="42" height="376" viewBox="67 264 42 376"><rect x="67" y="264" width="42" height="376" fill="#fff"/><rect x="67" y="269.00" width="29" height="15.40" fill="#000"/><rect x="67" y="283.80" width="42" height="1" fill="#9a9a9a"/><rect x="96" y="268.60" width="13" height=".800" fill="#d0d0d0"/><rect x="67" y="299.20" width="42" height="1" fill="#9a9a9a"/><rect x="67" y="315.20" width="29" height="15.40" fill="#000"/><rect x="67" y="330.00" width="42" height="1" fill="#9a9a9a"/><rect x="96" y="314.80" width="13" height=".800" fill="#d0d0d0"/><rect x="67" y="346.00" width="29" height="15.40" fill="#000"/><rect x="67" y="360.80" width="42" height="1" fill="#9a9a9a"/><rect x="96" y="345.60" width="13" height=".800" fill="#d0d0d0"/><rect x="67" y="376.80" width="29" height="15.40" fill="#000"/><rect x="67" y="391.60" width="42" height="1" fill="#9a9a9a"/><rect x="96" y="376.40" width="13" height=".800" fill="#d0d0d0"/><rect x="67" y="407.00" width="42" height="1" fill="#9a9a9a"/><rect x="67" y="423.00" width="29" height="15.40" fill="#000"/><rect x="67" y="437.80" width="42" height="1" fill="#9a9a9a"/><rect x="96" y="422.60" width="13" height=".800" fill="#d0d0d0"/><rect x="67" y="453.80" width="29" height="15.40" fill="#000"/><rect x="67" y="468.60" width="42" height="1" fill="#9a9a9a"/><rect x="96" y="453.40" width="13" height=".800" fill="#d0d0d0"/><rect x="67" y="484.00" width="42" height="1" fill="#9a9a9a"/><rect x="67" y="500.00" width="29" height="15.40" fill="#000"/><rect x="67" y="514.80" width="42" height="1" fill="#9a9a9a"/><rect x="96" y="499.60" width="13" height=".800" fill="#d0d0d0"/><rect x="67" y="530.80" width="29" height="15.40" fill="#000"/><rect x="67" y="545.60" width="42" height="1" fill="#9a9a9a"/><rect x="96" y="530.40" width="13" height=".800" fill="#d0d0d0"/><rect x="67" y="561.60" width="29" height="15.40" fill="#000"/><rect x="67" y="576.40" width="42" height="1" fill="#9a9a9a"/><rect x="96" y="561.20" width="13" height=".800" fill="#d0d0d0"/><rect x="67" y="591.80" width="42" height="1" fill="#9a9a9a"/><rect x="67" y="607.80" width="29" height="15.40" fill="#000"/><rect x="67" y="622.60" width="42" height="1" fill="#9a9a9a"/><rect x="96" y="607.40" width="13" height=".800" fill="#d0d0d0"/><rect x="67" y="638.60" width="29" height="15.40" fill="#000"/><rect x="67" y="653.40" width="42" height="1" fill="#9a9a9a"/><rect x="96" y="638.20" width="13" height=".800" fill="#d0d0d0"/><rect x="67" y="638.500" width="29" height="1.500" fill="#111"/></svg>
<div class="t" style="left:88.5px;top:286.70000000000005px;font-size:12.5px;color:#111;-webkit-text-stroke:0.45px #111;transform-origin:0 50%;transform:scaleX(1.033);">C6</div>
<div class="t" style="left:88.5px;top:363.70000000000005px;font-size:12.5px;color:#111;-webkit-text-stroke:0.45px #111;transform-origin:0 50%;transform:scaleX(0.990);">G5</div>
<div class="t" style="left:88.5px;top:471.50000000000006px;font-size:12.5px;color:#111;-webkit-text-stroke:0.45px #111;transform-origin:0 50%;transform:scaleX(1.033);">C5</div>
<div class="t" style="left:88.5px;top:548.5px;font-size:12.5px;color:#111;-webkit-text-stroke:0.45px #111;transform-origin:0 50%;transform:scaleX(0.990);">G4</div>
<div class="a" style="left:109px;top:626px;width:1191px;height:14px;background:#1b1b1b"></div>
<div class="a" style="left:116px;top:629px;width:29px;height:8px;border-radius:4px;background:#8e5a32"></div>
<div class="a" style="left:8px;top:640.500px;width:1293px;height:30px;background:#1b1b1b"></div>
<div class="a" style="left:8px;top:641px;width:200px;height:29px;background:#382d29"></div>
<div class="t" style="left:108.0px;top:649.2px;font-size:13px;color:#c98550;-webkit-text-stroke:0.35px #c98550;transform:translateX(-50%) scaleX(1.054);">Tools</div>
<div class="a" style="left:209px;top:641px;width:200px;height:29px;background:#382d29"></div>
<div class="t" style="left:309.0px;top:649.2px;font-size:13px;color:#c98550;-webkit-text-stroke:0.35px #c98550;transform:translateX(-50%) scaleX(1.023);">Mixer</div>
<div class="a" style="left:410px;top:641px;width:200px;height:29px;background:#382d29"></div>
<div class="t" style="left:510.0px;top:649.2px;font-size:13px;color:#f09a50;-webkit-text-stroke:0.35px #f09a50;transform:translateX(-50%) scaleX(1.032);">Pitches</div>
<div class="a" style="left:611px;top:641px;width:200px;height:29px;background:#382d29"></div>
<div class="t" style="left:711.0px;top:649.2px;font-size:13px;color:#c98550;-webkit-text-stroke:0.35px #c98550;transform:translateX(-50%) scaleX(0.981);">Analyzers</div>
<div class="a" style="left:8px;top:669.500px;width:1293px;height:1.200px;background:#5c5c5c"></div>
<div class="a" style="left:410px;top:667.300px;width:200px;height:3.200px;background:#f0883a"></div>
<div class="a" style="left:8px;top:671px;width:1293px;height:231px;background:#1c1c1c"></div>
<div class="a" style="left:13px;top:676px;width:300px;height:220px;background:#242424"></div>
<div class="a" style="left:339.500px;top:676px;width:768.500px;height:220px;background:#242424"></div>
<div class="a" style="left:1135.500px;top:676px;width:159.500px;height:220px;background:#242424"></div>
<div class="t" style="left:21px;top:685.5px;font-size:13.5px;color:#f0913e;-webkit-text-stroke:0.4px #f0913e;transform-origin:0 50%;transform:scaleX(1.002);">Midi Parameters - </div>
<div class="t" style="left:131.5px;top:685.5px;font-size:13.5px;color:#22e6da;-webkit-text-stroke:0.4px #22e6da;transform-origin:0 50%;transform:scaleX(0.970);">Piano</div>
<svg class="a" style="left:294px;top:681px" width="14" height="14" viewBox="0 0 14 14"><circle cx="7" cy="7" r="5.800" fill="none" stroke="#b06f38" stroke-width="1.100"/></svg>
<div class="t" style="left:301px;top:683.3px;font-size:10px;color:#b06f38;-webkit-text-stroke:0.3px #b06f38;transform:translateX(-50%);">?</div>
<div class="a" style="left:13px;top:705px;width:300px;height:191px;border:2px solid #1fe6da;border-radius:4px"></div>
<div class="t" style="left:65.5px;top:717px;font-size:13.5px;color:#f2f2f2;-webkit-text-stroke:0.4px #f2f2f2;transform:translateX(-50%) scaleX(1.017);">Start</div>
<svg class="a" style="left:25.5px;top:735px" width="80" height="80" viewBox="25.5 735 80 80" fill="none"><path d="M43.72 796.78A30.8 30.8 0 1 1 87.28 796.78" stroke="#565656" stroke-width="5"/><path d="M43.72 796.78A30.8 30.8 0 0 1 35.50 768.05" stroke="#f4a05a" stroke-width="5"/><circle cx="65.5" cy="775" r="23" fill="#975a30" stroke="#0a0a0a" stroke-width="1.200"/><path d="M58.19 773.31L44.07 770.03" stroke="#c99a7a" stroke-width="4"/></svg>
<div class="t" style="left:162.3px;top:717px;font-size:13.5px;color:#f2f2f2;-webkit-text-stroke:0.4px #f2f2f2;transform:translateX(-50%) scaleX(0.937);">End</div>
<svg class="a" style="left:122.30000000000001px;top:735px" width="80" height="80" viewBox="122.30000000000001 735 80 80" fill="none"><path d="M140.52 796.78A30.8 30.8 0 1 1 184.08 796.78" stroke="#565656" stroke-width="5"/><path d="M140.52 796.78A30.8 30.8 0 0 1 155.11 745.05" stroke="#f4a05a" stroke-width="5"/><circle cx="162.3" cy="775" r="23" fill="#975a30" stroke="#0a0a0a" stroke-width="1.200"/><path d="M160.55 767.71L157.16 753.61" stroke="#c99a7a" stroke-width="4"/></svg>
<div class="t" style="left:259.5px;top:717px;font-size:13.5px;color:#f2f2f2;-webkit-text-stroke:0.4px #f2f2f2;transform:translateX(-50%) scaleX(1.022);">Volume</div>
<svg class="a" style="left:219.5px;top:735px" width="80" height="80" viewBox="219.5 735 80 80" fill="none"><path d="M237.72 796.78A30.8 30.8 0 1 1 281.28 796.78" stroke="#565656" stroke-width="5"/><path d="M237.72 796.78A30.8 30.8 0 0 1 245.52 747.56" stroke="#f4a05a" stroke-width="5"/><circle cx="259.5" cy="775" r="23" fill="#975a30" stroke="#0a0a0a" stroke-width="1.200"/><path d="M256.10 768.32L249.51 755.40" stroke="#c99a7a" stroke-width="4"/></svg>
<div class="a" style="left:21px;top:818px;width:284px;height:1.200px;background:#c0763c"></div>
<div class="a" style="left:100px;top:835px;width:70px;height:22px;border-radius:4px;background:#382d29"></div>
<div class="t" style="left:135px;top:840.5px;font-size:11px;color:#f0a060;letter-spacing:0.6px;-webkit-text-stroke:0.35px #f0a060;transform:translateX(-50%) scaleX(0.963);">SAVE MIDI</div>
<div class="a" style="left:175px;top:835px;width:60px;height:22px;border-radius:4px;background:#f5a15c"></div>
<div class="t" style="left:205px;top:840px;font-size:12.5px;color:#161616;-webkit-text-stroke:0.4px #161616;transform:translateX(-50%) scaleX(0.935);">Drag Midi</div>
<div class="a" style="left:80px;top:863px;width:170px;height:18px;border-radius:4px;background:#382d29"></div>
<div class="a" style="left:135px;top:863px;width:60px;height:18px;background:#f5a15c"></div>
<div class="t" style="left:107.3px;top:867.3px;font-size:9.5px;color:#f0a060;letter-spacing:0.7px;-webkit-text-stroke:0.3px #f0a060;transform:translateX(-50%) scaleX(0.895);">ALL</div>
<div class="t" style="left:165px;top:867.3px;font-size:9.5px;color:#2a1a10;letter-spacing:0.7px;-webkit-text-stroke:0.3px #2a1a10;transform:translateX(-50%) scaleX(0.858);">VISIBLE</div>
<div class="t" style="left:222.3px;top:867.3px;font-size:9.5px;color:#f0a060;letter-spacing:0.7px;-webkit-text-stroke:0.3px #f0a060;transform:translateX(-50%) scaleX(0.856);">LOOP</div>
<div class="t" style="left:348px;top:685.5px;font-size:13.5px;color:#f0913e;-webkit-text-stroke:0.4px #f0913e;transform-origin:0 50%;transform:scaleX(1.012);">Tracks</div>
<div class="a" style="left:344px;top:706px;width:120px;height:189.500px;border:1.800px solid #f01c9c;border-radius:4px"></div>
<div class="a" style="left:344px;top:706px;width:120px;height:24px;border:1.800px solid #f01c9c;border-radius:4px;background:rgb(58,32,44)"></div>
<div class="t" style="left:404px;top:713px;font-size:11px;color:#f01c9c;letter-spacing:0.8px;-webkit-text-stroke:0.55px #f01c9c;transform:translateX(-50%) scaleX(0.902);">DRUMS</div>
<div class="cb" style="left:355.5px;top:749.8px"></div>
<div class="t" style="left:377px;top:749.0px;font-size:13.5px;color:#e9bd5c;-webkit-text-stroke:0.4px #e9bd5c;transform-origin:0 50%;transform:scaleX(0.932);">Spectrogram</div>
<div class="sm" style="left:372px;top:864px;background:#233026">S</div>
<div class="sm" style="left:412px;top:864px;background:#332724">M</div>
<div class="a" style="left:472px;top:706px;width:120px;height:189.500px;border:1.800px solid #2466e8;border-radius:4px"></div>
<div class="a" style="left:472px;top:706px;width:120px;height:24px;border:1.800px solid #2466e8;border-radius:4px;background:rgb(38,44,62)"></div>
<div class="t" style="left:532px;top:713px;font-size:11px;color:#2466e8;letter-spacing:0.8px;-webkit-text-stroke:0.55px #2466e8;transform:translateX(-50%) scaleX(0.891);">BASS</div>
<div class="cb" style="left:483.5px;top:749.8px"></div>
<div class="t" style="left:505px;top:749.0px;font-size:13.5px;color:#e9bd5c;-webkit-text-stroke:0.4px #e9bd5c;transform-origin:0 50%;transform:scaleX(0.932);">Spectrogram</div>
<div class="cb" style="left:483.5px;top:773.8px"></div>
<svg class="a" style="left:483.5px;top:773.8px" width="13" height="13" viewBox="0 0 13 13"><path d="M2.800 6.800L5.400 9.600 10.200 2.900" fill="none" stroke="#f59a4a" stroke-width="1.600"/></svg>
<div class="t" style="left:505px;top:773.0px;font-size:13.5px;color:#e9bd5c;-webkit-text-stroke:0.4px #e9bd5c;transform-origin:0 50%;transform:scaleX(0.966);">Pitch</div>
<div class="cb" style="left:483.5px;top:797.8px"></div>
<svg class="a" style="left:483.5px;top:797.8px" width="13" height="13" viewBox="0 0 13 13"><path d="M2.800 6.800L5.400 9.600 10.200 2.900" fill="none" stroke="#f59a4a" stroke-width="1.600"/></svg>
<div class="t" style="left:505px;top:797.0px;font-size:13.5px;color:#e9bd5c;-webkit-text-stroke:0.4px #e9bd5c;transform-origin:0 50%;transform:scaleX(0.990);">Midi</div>
<div class="sm" style="left:500px;top:864px;background:#233026">S</div>
<div class="sm" style="left:540px;top:864px;background:#332724">M</div>
<div class="a" style="left:600px;top:706px;width:120px;height:189.500px;border:1.800px solid #fa8c14;border-radius:4px"></div>
<div class="a" style="left:600px;top:706px;width:120px;height:24px;border:1.800px solid #fa8c14;border-radius:4px;background:rgb(60,44,30)"></div>
<div class="t" style="left:660px;top:713px;font-size:11px;color:#fa8c14;letter-spacing:0.8px;-webkit-text-stroke:0.55px #fa8c14;transform:translateX(-50%) scaleX(0.880);">THE REST</div>
<div class="cb" style="left:611.5px;top:749.8px"></div>
<div class="t" style="left:633px;top:749.0px;font-size:13.5px;color:#e9bd5c;-webkit-text-stroke:0.4px #e9bd5c;transform-origin:0 50%;transform:scaleX(0.932);">Spectrogram</div>
<div class="cb" style="left:611.5px;top:773.8px"></div>
<svg class="a" style="left:611.5px;top:773.8px" width="13" height="13" viewBox="0 0 13 13"><path d="M2.800 6.800L5.400 9.600 10.200 2.900" fill="none" stroke="#f59a4a" stroke-width="1.600"/></svg>
<div class="t" style="left:633px;top:773.0px;font-size:13.5px;color:#e9bd5c;-webkit-text-stroke:0.4px #e9bd5c;transform-origin:0 50%;transform:scaleX(0.966);">Pitch</div>
<div class="cb" style="left:611.5px;top:797.8px"></div>
<div class="t" style="left:633px;top:797.0px;font-size:13.5px;color:#e9bd5c;-webkit-text-stroke:0.4px #e9bd5c;transform-origin:0 50%;transform:scaleX(0.990);">Midi</div>
<div class="sm" style="left:628px;top:864px;background:#233026">S</div>
<div class="sm" style="left:668px;top:864px;background:#332724">M</div>
<div class="a" style="left:728px;top:706px;width:120px;height:189.500px;border:1.800px solid #f2f21c;border-radius:4px"></div>
<div class="a" style="left:728px;top:706px;width:120px;height:24px;border:1.800px solid #f2f21c;border-radius:4px;background:rgb(58,58,30)"></div>
<div class="t" style="left:788px;top:713px;font-size:11px;color:#f2f21c;letter-spacing:0.8px;-webkit-text-stroke:0.55px #f2f21c;transform:translateX(-50%) scaleX(0.971);">VOCALS</div>
<div class="cb" style="left:739.5px;top:749.8px"></div>
<div class="t" style="left:761px;top:749.0px;font-size:13.5px;color:#e9bd5c;-webkit-text-stroke:0.4px #e9bd5c;transform-origin:0 50%;transform:scaleX(0.932);">Spectrogram</div>
<div class="cb" style="left:739.5px;top:773.8px"></div>
<svg class="a" style="left:739.5px;top:773.8px" width="13" height="13" viewBox="0 0 13 13"><path d="M2.800 6.800L5.400 9.600 10.200 2.900" fill="none" stroke="#f59a4a" stroke-width="1.600"/></svg>
<div class="t" style="left:761px;top:773.0px;font-size:13.5px;color:#e9bd5c;-webkit-text-stroke:0.4px #e9bd5c;transform-origin:0 50%;transform:scaleX(0.966);">Pitch</div>
<div class="cb" style="left:739.5px;top:797.8px"></div>
<div class="t" style="left:761px;top:797.0px;font-size:13.5px;color:#e9bd5c;-webkit-text-stroke:0.4px #e9bd5c;transform-origin:0 50%;transform:scaleX(0.990);">Midi</div>
<div class="sm" style="left:756px;top:864px;background:#233026">S</div>
<div class="sm" style="left:796px;top:864px;background:#332724">M</div>
<div class="a" style="left:856px;top:706px;width:120px;height:189.500px;border:1.800px solid #46e01e;border-radius:4px"></div>
<div class="a" style="left:856px;top:706px;width:120px;height:24px;border:1.800px solid #46e01e;border-radius:4px;background:rgb(40,56,32)"></div>
<div class="t" style="left:916px;top:713px;font-size:11px;color:#46e01e;letter-spacing:0.8px;-webkit-text-stroke:0.55px #46e01e;transform:translateX(-50%) scaleX(0.988);">GUITAR</div>
<div class="cb" style="left:867.5px;top:749.8px"></div>
<div class="t" style="left:889px;top:749.0px;font-size:13.5px;color:#e9bd5c;-webkit-text-stroke:0.4px #e9bd5c;transform-origin:0 50%;transform:scaleX(0.932);">Spectrogram</div>
<div class="cb" style="left:867.5px;top:773.8px"></div>
<svg class="a" style="left:867.5px;top:773.8px" width="13" height="13" viewBox="0 0 13 13"><path d="M2.800 6.800L5.400 9.600 10.200 2.900" fill="none" stroke="#f59a4a" stroke-width="1.600"/></svg>
<div class="t" style="left:889px;top:773.0px;font-size:13.5px;color:#e9bd5c;-webkit-text-stroke:0.4px #e9bd5c;transform-origin:0 50%;transform:scaleX(0.966);">Pitch</div>
<div class="cb" style="left:867.5px;top:797.8px"></div>
<svg class="a" style="left:867.5px;top:797.8px" width="13" height="13" viewBox="0 0 13 13"><path d="M2.800 6.800L5.400 9.600 10.200 2.900" fill="none" stroke="#f59a4a" stroke-width="1.600"/></svg>
<div class="t" style="left:889px;top:797.0px;font-size:13.5px;color:#e9bd5c;-webkit-text-stroke:0.4px #e9bd5c;transform-origin:0 50%;transform:scaleX(0.990);">Midi</div>
<div class="sm" style="left:884px;top:864px;background:#233026">S</div>
<div class="sm" style="left:924px;top:864px;background:#332724">M</div>
<div class="a" style="left:984px;top:706px;width:120px;height:189.500px;border:1.800px solid #1fe6da;border-radius:4px"></div>
<div class="a" style="left:984px;top:706px;width:120px;height:24px;border:1.800px solid #1fe6da;border-radius:4px;background:rgb(36,58,58)"></div>
<div class="t" style="left:1044px;top:713px;font-size:11px;color:#1fe6da;letter-spacing:0.8px;-webkit-text-stroke:0.55px #1fe6da;transform:translateX(-50%) scaleX(0.981);">PIANO</div>
<div class="cb" style="left:995.5px;top:749.8px"></div>
<div class="t" style="left:1017px;top:749.0px;font-size:13.5px;color:#e9bd5c;-webkit-text-stroke:0.4px #e9bd5c;transform-origin:0 50%;transform:scaleX(0.932);">Spectrogram</div>
<div class="cb" style="left:995.5px;top:773.8px"></div>
<svg class="a" style="left:995.5px;top:773.8px" width="13" height="13" viewBox="0 0 13 13"><path d="M2.800 6.800L5.400 9.600 10.200 2.900" fill="none" stroke="#f59a4a" stroke-width="1.600"/></svg>
<div class="t" style="left:1017px;top:773.0px;font-size:13.5px;color:#e9bd5c;-webkit-text-stroke:0.4px #e9bd5c;transform-origin:0 50%;transform:scaleX(0.966);">Pitch</div>
<div class="cb" style="left:995.5px;top:797.8px"></div>
<svg class="a" style="left:995.5px;top:797.8px" width="13" height="13" viewBox="0 0 13 13"><path d="M2.800 6.800L5.400 9.600 10.200 2.900" fill="none" stroke="#f59a4a" stroke-width="1.600"/></svg>
<div class="t" style="left:1017px;top:797.0px;font-size:13.5px;color:#e9bd5c;-webkit-text-stroke:0.4px #e9bd5c;transform-origin:0 50%;transform:scaleX(0.990);">Midi</div>
<div class="sm" style="left:1012px;top:864px;background:#233026">S</div>
<div class="sm" style="left:1052px;top:864px;background:#332724">M</div>
<div class="t" style="left:1143px;top:685.5px;font-size:13.5px;color:#f0913e;-webkit-text-stroke:0.4px #f0913e;transform-origin:0 50%;transform:scaleX(0.989);">Options</div>
<div class="cb" style="left:1148.500px;top:714.3px;width:17px;height:17px;border-radius:4.500px;border-color:#605c5a"></div>
<svg class="a" style="left:1148.5px;top:714.3px" width="17" height="17" viewBox="0 0 13 13"><path d="M2.800 6.800L5.400 9.600 10.200 2.900" fill="none" stroke="#f59a4a" stroke-width="1.600"/></svg>
<div class="t" style="left:1174px;top:716.0px;font-size:13px;color:#e9bd5c;-webkit-text-stroke:0.35px #e9bd5c;transform-origin:0 50%;transform:scaleX(0.840);">Show Bg Keys</div>
<div class="cb" style="left:1148.500px;top:738.0px;width:17px;height:17px;border-radius:4.500px;border-color:#605c5a"></div>
<div class="t" style="left:1174px;top:739.7px;font-size:13px;color:#e9bd5c;-webkit-text-stroke:0.35px #e9bd5c;transform-origin:0 50%;transform:scaleX(0.939);">Show Grid</div>
<svg class="a" style="left:1136px;top:707.500px" width="15" height="23" viewBox="0 0 15 23"><path d="M1.500 1.500v16.500l3.800-3.600 2.700 6.300 2.600-1.100-2.700-6.200h5.300z" fill="#fff" stroke="#050505" stroke-width="1.200" stroke-linejoin="miter"/></svg>
</div></body></html>
